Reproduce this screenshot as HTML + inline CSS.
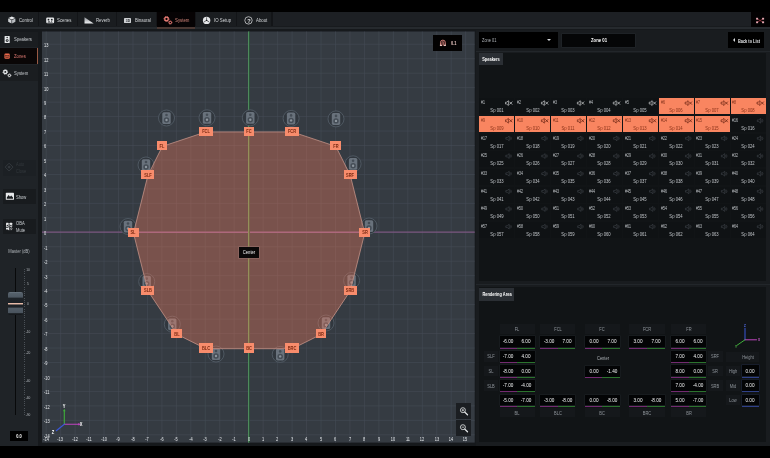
<!DOCTYPE html>
<html><head><meta charset="utf-8"><title>Zones</title>
<style>
html,body{margin:0;padding:0;background:#000;}
body{width:770px;height:458px;overflow:hidden;position:relative;font-family:"Liberation Sans",sans-serif;}
#r{position:absolute;left:0;top:0;width:770px;height:458px;overflow:hidden;filter:brightness(1);}
#r div,#r svg,#r span.t{position:absolute;}
#r span.t{white-space:nowrap;display:block;}
</style></head><body><div id="r">
<div style="left:0.00px;top:11.60px;width:770.00px;height:434.00px;background:#16191c;"></div>
<div style="left:0.00px;top:11.60px;width:770.00px;height:14.80px;background:#1d2024;"></div>
<div style="left:0.00px;top:11.60px;width:272.00px;height:14.80px;background:#1a1d20;"></div>
<div style="left:0.00px;top:26.40px;width:770.00px;height:1.00px;background:#181b1e;"></div>
<div style="left:0.00px;top:27.30px;width:770.00px;height:1.40px;background:#262a2e;"></div>
<div style="left:38.10px;top:11.60px;width:1.20px;height:14.80px;background:#131518;"></div>
<span class="t" style="left:18.70px;top:17px;font-size:5.7px;line-height:6px;color:#d4d7da;font-weight:400;transform:scaleX(0.76);transform-origin:0 50%;">Control</span>
<div style="left:76.60px;top:11.60px;width:1.20px;height:14.80px;background:#131518;"></div>
<span class="t" style="left:57.30px;top:17px;font-size:5.7px;line-height:6px;color:#d4d7da;font-weight:400;transform:scaleX(0.76);transform-origin:0 50%;">Scenes</span>
<div style="left:115.80px;top:11.60px;width:1.20px;height:14.80px;background:#131518;"></div>
<span class="t" style="left:96.00px;top:17px;font-size:5.7px;line-height:6px;color:#d4d7da;font-weight:400;transform:scaleX(0.76);transform-origin:0 50%;">Reverb</span>
<div style="left:156.00px;top:11.60px;width:1.20px;height:14.80px;background:#131518;"></div>
<span class="t" style="left:134.80px;top:17px;font-size:5.7px;line-height:6px;color:#d4d7da;font-weight:400;transform:scaleX(0.76);transform-origin:0 50%;">Binaural</span>
<div style="left:157.20px;top:11.60px;width:37.60px;height:15.20px;background:#060304;"></div>
<div style="left:157.20px;top:27.30px;width:37.60px;height:1.40px;background:#4a3833;"></div>
<div style="left:194.80px;top:11.60px;width:1.20px;height:14.80px;background:#131518;"></div>
<span class="t" style="left:175.30px;top:17px;font-size:5.7px;line-height:6px;color:#d98a7e;font-weight:400;transform:scaleX(0.76);transform-origin:0 50%;">System</span>
<div style="left:235.80px;top:11.60px;width:1.20px;height:14.80px;background:#131518;"></div>
<span class="t" style="left:214.20px;top:17px;font-size:5.7px;line-height:6px;color:#d4d7da;font-weight:400;transform:scaleX(0.76);transform-origin:0 50%;">IO Setup</span>
<div style="left:271.40px;top:11.60px;width:1.20px;height:14.80px;background:#131518;"></div>
<span class="t" style="left:255.80px;top:17px;font-size:5.7px;line-height:6px;color:#d4d7da;font-weight:400;transform:scaleX(0.76);transform-origin:0 50%;">About</span>
<div style="left:0.00px;top:31.50px;width:38.00px;height:414.10px;background:#1f2327;"></div>
<div style="left:0.00px;top:31.60px;width:38.00px;height:15.60px;background:#1a1d20;"></div>
<span class="t" style="left:13.60px;top:36px;font-size:5.6px;line-height:6px;color:#c9cdd1;font-weight:400;transform:scaleX(0.76);transform-origin:0 50%;">Speakers</span>
<div style="left:0.00px;top:48.20px;width:38.00px;height:16.00px;background:#0a0606;"></div>
<div style="left:37.30px;top:48.20px;width:0.80px;height:16.00px;background:#9a5a44;"></div>
<span class="t" style="left:13.60px;top:53px;font-size:5.6px;line-height:6px;color:#e27c74;font-weight:400;transform:scaleX(0.76);transform-origin:0 50%;">Zones</span>
<div style="left:0.00px;top:65.00px;width:38.00px;height:15.80px;background:#1a1d20;"></div>
<span class="t" style="left:13.60px;top:70px;font-size:5.6px;line-height:6px;color:#c9cdd1;font-weight:400;transform:scaleX(0.76);transform-origin:0 50%;">System</span>
<div style="left:2.50px;top:159.50px;width:33.50px;height:16.00px;background:#1c2024;"></div>
<span class="t" style="left:16.00px;top:161px;font-size:5.2px;line-height:6px;color:#33383d;font-weight:400;transform:scaleX(0.76);transform-origin:0 50%;">Auto</span>
<span class="t" style="left:16.00px;top:168px;font-size:5.2px;line-height:6px;color:#33383d;font-weight:400;transform:scaleX(0.76);transform-origin:0 50%;">Close</span>
<div style="left:2.50px;top:188.70px;width:33.50px;height:15.80px;background:#181b1e;"></div>
<span class="t" style="left:16.00px;top:194px;font-size:5.4px;line-height:6px;color:#c9cdd1;font-weight:400;transform:scaleX(0.76);transform-origin:0 50%;">Show</span>
<div style="left:2.50px;top:218.50px;width:33.50px;height:15.80px;background:#181b1e;"></div>
<span class="t" style="left:16.00px;top:220px;font-size:5.4px;line-height:6px;color:#c9cdd1;font-weight:400;transform:scaleX(0.76);transform-origin:0 50%;">OBA</span>
<span class="t" style="left:16.00px;top:227px;font-size:5.4px;line-height:6px;color:#c9cdd1;font-weight:400;transform:scaleX(0.76);transform-origin:0 50%;">Mute</span>
<span class="t" style="left:19.00px;top:248px;font-size:5.4px;line-height:6px;color:#aeb3b8;font-weight:400;transform:translateX(-50%) scaleX(0.76);">Master (dB)</span>
<div style="left:14.90px;top:268.00px;width:1.00px;height:147.00px;background:#08090a;"></div>
<span class="t" style="left:28.40px;top:268px;font-size:3.8px;line-height:4px;color:#b4b9be;font-weight:400;transform:translateX(-50%) scaleX(0.85);">10</span>
<span class="t" style="left:28.40px;top:282px;font-size:3.8px;line-height:4px;color:#b4b9be;font-weight:400;transform:translateX(-50%) scaleX(0.85);">5</span>
<span class="t" style="left:28.40px;top:302px;font-size:3.8px;line-height:4px;color:#b4b9be;font-weight:400;transform:translateX(-50%) scaleX(0.85);">0</span>
<span class="t" style="left:28.40px;top:330px;font-size:3.8px;line-height:4px;color:#b4b9be;font-weight:400;transform:translateX(-50%) scaleX(0.85);">-10</span>
<span class="t" style="left:28.40px;top:351px;font-size:3.8px;line-height:4px;color:#b4b9be;font-weight:400;transform:translateX(-50%) scaleX(0.85);">-20</span>
<span class="t" style="left:28.40px;top:379px;font-size:3.8px;line-height:4px;color:#b4b9be;font-weight:400;transform:translateX(-50%) scaleX(0.85);">-40</span>
<span class="t" style="left:28.40px;top:396px;font-size:3.8px;line-height:4px;color:#b4b9be;font-weight:400;transform:translateX(-50%) scaleX(0.85);">-60</span>
<span class="t" style="left:28.40px;top:413px;font-size:3.8px;line-height:4px;color:#b4b9be;font-weight:400;transform:translateX(-50%) scaleX(0.85);">-90</span>
<div style="left:8.3px;top:292px;width:14.6px;height:23px;border-radius:2px;background:linear-gradient(#6a7680 0%,#56616b 6%,#4d5761 22%,#1e2328 27%,#1b2025 47%,#e8bba8 49.5%,#e8bba8 53%,#1b2025 55.5%,#1e2328 66%,#525c66 70%,#4a545e 90%,#1a1e22 94%,#15181b 100%);"></div>
<div style="left:24.00px;top:269.00px;width:0.80px;height:0.80px;background:#4a5056;"></div>
<div style="left:24.00px;top:271.20px;width:0.80px;height:0.80px;background:#4a5056;"></div>
<div style="left:24.00px;top:273.40px;width:0.80px;height:0.80px;background:#4a5056;"></div>
<div style="left:24.00px;top:275.60px;width:0.80px;height:0.80px;background:#4a5056;"></div>
<div style="left:24.00px;top:277.80px;width:0.80px;height:0.80px;background:#4a5056;"></div>
<div style="left:24.00px;top:280.00px;width:0.80px;height:0.80px;background:#4a5056;"></div>
<div style="left:24.00px;top:282.20px;width:0.80px;height:0.80px;background:#4a5056;"></div>
<div style="left:24.00px;top:284.40px;width:0.80px;height:0.80px;background:#4a5056;"></div>
<div style="left:24.00px;top:286.60px;width:0.80px;height:0.80px;background:#4a5056;"></div>
<div style="left:24.00px;top:288.80px;width:0.80px;height:0.80px;background:#4a5056;"></div>
<div style="left:24.00px;top:291.00px;width:0.80px;height:0.80px;background:#4a5056;"></div>
<div style="left:24.00px;top:293.20px;width:0.80px;height:0.80px;background:#4a5056;"></div>
<div style="left:24.00px;top:295.40px;width:0.80px;height:0.80px;background:#4a5056;"></div>
<div style="left:24.00px;top:297.60px;width:0.80px;height:0.80px;background:#4a5056;"></div>
<div style="left:24.00px;top:299.80px;width:0.80px;height:0.80px;background:#4a5056;"></div>
<div style="left:24.00px;top:302.00px;width:0.80px;height:0.80px;background:#4a5056;"></div>
<div style="left:24.00px;top:304.20px;width:0.80px;height:0.80px;background:#4a5056;"></div>
<div style="left:24.00px;top:306.40px;width:0.80px;height:0.80px;background:#4a5056;"></div>
<div style="left:24.00px;top:308.60px;width:0.80px;height:0.80px;background:#4a5056;"></div>
<div style="left:24.00px;top:310.80px;width:0.80px;height:0.80px;background:#4a5056;"></div>
<div style="left:24.00px;top:313.00px;width:0.80px;height:0.80px;background:#4a5056;"></div>
<div style="left:24.00px;top:315.20px;width:0.80px;height:0.80px;background:#4a5056;"></div>
<div style="left:24.00px;top:317.40px;width:0.80px;height:0.80px;background:#4a5056;"></div>
<div style="left:24.00px;top:319.60px;width:0.80px;height:0.80px;background:#4a5056;"></div>
<div style="left:24.00px;top:321.80px;width:0.80px;height:0.80px;background:#4a5056;"></div>
<div style="left:24.00px;top:324.00px;width:0.80px;height:0.80px;background:#4a5056;"></div>
<div style="left:24.00px;top:326.20px;width:0.80px;height:0.80px;background:#4a5056;"></div>
<div style="left:24.00px;top:328.40px;width:0.80px;height:0.80px;background:#4a5056;"></div>
<div style="left:24.00px;top:330.60px;width:0.80px;height:0.80px;background:#4a5056;"></div>
<div style="left:24.00px;top:332.80px;width:0.80px;height:0.80px;background:#4a5056;"></div>
<div style="left:24.00px;top:335.00px;width:0.80px;height:0.80px;background:#4a5056;"></div>
<div style="left:24.00px;top:337.20px;width:0.80px;height:0.80px;background:#4a5056;"></div>
<div style="left:24.00px;top:339.40px;width:0.80px;height:0.80px;background:#4a5056;"></div>
<div style="left:24.00px;top:341.60px;width:0.80px;height:0.80px;background:#4a5056;"></div>
<div style="left:24.00px;top:343.80px;width:0.80px;height:0.80px;background:#4a5056;"></div>
<div style="left:24.00px;top:346.00px;width:0.80px;height:0.80px;background:#4a5056;"></div>
<div style="left:24.00px;top:348.20px;width:0.80px;height:0.80px;background:#4a5056;"></div>
<div style="left:24.00px;top:350.40px;width:0.80px;height:0.80px;background:#4a5056;"></div>
<div style="left:24.00px;top:352.60px;width:0.80px;height:0.80px;background:#4a5056;"></div>
<div style="left:24.00px;top:354.80px;width:0.80px;height:0.80px;background:#4a5056;"></div>
<div style="left:24.00px;top:357.00px;width:0.80px;height:0.80px;background:#4a5056;"></div>
<div style="left:24.00px;top:359.20px;width:0.80px;height:0.80px;background:#4a5056;"></div>
<div style="left:24.00px;top:361.40px;width:0.80px;height:0.80px;background:#4a5056;"></div>
<div style="left:24.00px;top:363.60px;width:0.80px;height:0.80px;background:#4a5056;"></div>
<div style="left:24.00px;top:365.80px;width:0.80px;height:0.80px;background:#4a5056;"></div>
<div style="left:24.00px;top:368.00px;width:0.80px;height:0.80px;background:#4a5056;"></div>
<div style="left:24.00px;top:370.20px;width:0.80px;height:0.80px;background:#4a5056;"></div>
<div style="left:24.00px;top:372.40px;width:0.80px;height:0.80px;background:#4a5056;"></div>
<div style="left:24.00px;top:374.60px;width:0.80px;height:0.80px;background:#4a5056;"></div>
<div style="left:24.00px;top:376.80px;width:0.80px;height:0.80px;background:#4a5056;"></div>
<div style="left:24.00px;top:379.00px;width:0.80px;height:0.80px;background:#4a5056;"></div>
<div style="left:24.00px;top:381.20px;width:0.80px;height:0.80px;background:#4a5056;"></div>
<div style="left:24.00px;top:383.40px;width:0.80px;height:0.80px;background:#4a5056;"></div>
<div style="left:24.00px;top:385.60px;width:0.80px;height:0.80px;background:#4a5056;"></div>
<div style="left:24.00px;top:387.80px;width:0.80px;height:0.80px;background:#4a5056;"></div>
<div style="left:24.00px;top:390.00px;width:0.80px;height:0.80px;background:#4a5056;"></div>
<div style="left:24.00px;top:392.20px;width:0.80px;height:0.80px;background:#4a5056;"></div>
<div style="left:24.00px;top:394.40px;width:0.80px;height:0.80px;background:#4a5056;"></div>
<div style="left:24.00px;top:396.60px;width:0.80px;height:0.80px;background:#4a5056;"></div>
<div style="left:24.00px;top:398.80px;width:0.80px;height:0.80px;background:#4a5056;"></div>
<div style="left:24.00px;top:401.00px;width:0.80px;height:0.80px;background:#4a5056;"></div>
<div style="left:24.00px;top:403.20px;width:0.80px;height:0.80px;background:#4a5056;"></div>
<div style="left:24.00px;top:405.40px;width:0.80px;height:0.80px;background:#4a5056;"></div>
<div style="left:24.00px;top:407.60px;width:0.80px;height:0.80px;background:#4a5056;"></div>
<div style="left:24.00px;top:409.80px;width:0.80px;height:0.80px;background:#4a5056;"></div>
<div style="left:24.00px;top:412.00px;width:0.80px;height:0.80px;background:#4a5056;"></div>
<div style="left:24.00px;top:414.20px;width:0.80px;height:0.80px;background:#4a5056;"></div>
<div style="left:9.90px;top:431.00px;width:18.40px;height:10.00px;background:#000;"></div>
<span class="t" style="left:19.10px;top:433px;font-size:5.2px;line-height:6px;color:#fff;font-weight:700;transform:translateX(-50%) scaleX(0.76);">0.0</span>
<svg style="left:42px;top:31px;" width="434" height="413"><g transform="translate(0.000,0.500) scale(1.0000,1.0000) translate(-0.0,-0.0)"><rect x="0" y="0" width="432.7" height="411.1" fill="#353b42"/><line x1="4.19" y1="0" x2="4.19" y2="411.1" stroke="#454c55" stroke-width="0.6"/><line x1="18.66" y1="0" x2="18.66" y2="411.1" stroke="#454c55" stroke-width="0.6"/><line x1="33.12" y1="0" x2="33.12" y2="411.1" stroke="#454c55" stroke-width="0.6"/><line x1="47.58" y1="0" x2="47.58" y2="411.1" stroke="#454c55" stroke-width="0.6"/><line x1="62.05" y1="0" x2="62.05" y2="411.1" stroke="#454c55" stroke-width="0.6"/><line x1="76.51" y1="0" x2="76.51" y2="411.1" stroke="#454c55" stroke-width="0.6"/><line x1="90.98" y1="0" x2="90.98" y2="411.1" stroke="#454c55" stroke-width="0.6"/><line x1="105.44" y1="0" x2="105.44" y2="411.1" stroke="#454c55" stroke-width="0.6"/><line x1="119.91" y1="0" x2="119.91" y2="411.1" stroke="#454c55" stroke-width="0.6"/><line x1="134.38" y1="0" x2="134.38" y2="411.1" stroke="#454c55" stroke-width="0.6"/><line x1="148.84" y1="0" x2="148.84" y2="411.1" stroke="#454c55" stroke-width="0.6"/><line x1="163.31" y1="0" x2="163.31" y2="411.1" stroke="#454c55" stroke-width="0.6"/><line x1="177.77" y1="0" x2="177.77" y2="411.1" stroke="#454c55" stroke-width="0.6"/><line x1="192.23" y1="0" x2="192.23" y2="411.1" stroke="#454c55" stroke-width="0.6"/><line x1="206.70" y1="0" x2="206.70" y2="411.1" stroke="#454c55" stroke-width="0.6"/><line x1="221.16" y1="0" x2="221.16" y2="411.1" stroke="#454c55" stroke-width="0.6"/><line x1="235.63" y1="0" x2="235.63" y2="411.1" stroke="#454c55" stroke-width="0.6"/><line x1="250.09" y1="0" x2="250.09" y2="411.1" stroke="#454c55" stroke-width="0.6"/><line x1="264.56" y1="0" x2="264.56" y2="411.1" stroke="#454c55" stroke-width="0.6"/><line x1="279.02" y1="0" x2="279.02" y2="411.1" stroke="#454c55" stroke-width="0.6"/><line x1="293.49" y1="0" x2="293.49" y2="411.1" stroke="#454c55" stroke-width="0.6"/><line x1="307.95" y1="0" x2="307.95" y2="411.1" stroke="#454c55" stroke-width="0.6"/><line x1="322.42" y1="0" x2="322.42" y2="411.1" stroke="#454c55" stroke-width="0.6"/><line x1="336.88" y1="0" x2="336.88" y2="411.1" stroke="#454c55" stroke-width="0.6"/><line x1="351.35" y1="0" x2="351.35" y2="411.1" stroke="#454c55" stroke-width="0.6"/><line x1="365.81" y1="0" x2="365.81" y2="411.1" stroke="#454c55" stroke-width="0.6"/><line x1="380.28" y1="0" x2="380.28" y2="411.1" stroke="#454c55" stroke-width="0.6"/><line x1="394.75" y1="0" x2="394.75" y2="411.1" stroke="#454c55" stroke-width="0.6"/><line x1="409.21" y1="0" x2="409.21" y2="411.1" stroke="#454c55" stroke-width="0.6"/><line x1="423.67" y1="0" x2="423.67" y2="411.1" stroke="#454c55" stroke-width="0.6"/><line x1="0" y1="403.31" x2="432.7" y2="403.31" stroke="#454c55" stroke-width="0.6"/><line x1="0" y1="388.85" x2="432.7" y2="388.85" stroke="#454c55" stroke-width="0.6"/><line x1="0" y1="374.38" x2="432.7" y2="374.38" stroke="#454c55" stroke-width="0.6"/><line x1="0" y1="359.92" x2="432.7" y2="359.92" stroke="#454c55" stroke-width="0.6"/><line x1="0" y1="345.45" x2="432.7" y2="345.45" stroke="#454c55" stroke-width="0.6"/><line x1="0" y1="330.99" x2="432.7" y2="330.99" stroke="#454c55" stroke-width="0.6"/><line x1="0" y1="316.52" x2="432.7" y2="316.52" stroke="#454c55" stroke-width="0.6"/><line x1="0" y1="302.06" x2="432.7" y2="302.06" stroke="#454c55" stroke-width="0.6"/><line x1="0" y1="287.59" x2="432.7" y2="287.59" stroke="#454c55" stroke-width="0.6"/><line x1="0" y1="273.12" x2="432.7" y2="273.12" stroke="#454c55" stroke-width="0.6"/><line x1="0" y1="258.66" x2="432.7" y2="258.66" stroke="#454c55" stroke-width="0.6"/><line x1="0" y1="244.19" x2="432.7" y2="244.19" stroke="#454c55" stroke-width="0.6"/><line x1="0" y1="229.73" x2="432.7" y2="229.73" stroke="#454c55" stroke-width="0.6"/><line x1="0" y1="215.27" x2="432.7" y2="215.27" stroke="#454c55" stroke-width="0.6"/><line x1="0" y1="200.80" x2="432.7" y2="200.80" stroke="#454c55" stroke-width="0.6"/><line x1="0" y1="186.34" x2="432.7" y2="186.34" stroke="#454c55" stroke-width="0.6"/><line x1="0" y1="171.87" x2="432.7" y2="171.87" stroke="#454c55" stroke-width="0.6"/><line x1="0" y1="157.41" x2="432.7" y2="157.41" stroke="#454c55" stroke-width="0.6"/><line x1="0" y1="142.94" x2="432.7" y2="142.94" stroke="#454c55" stroke-width="0.6"/><line x1="0" y1="128.48" x2="432.7" y2="128.48" stroke="#454c55" stroke-width="0.6"/><line x1="0" y1="114.01" x2="432.7" y2="114.01" stroke="#454c55" stroke-width="0.6"/><line x1="0" y1="99.55" x2="432.7" y2="99.55" stroke="#454c55" stroke-width="0.6"/><line x1="0" y1="85.08" x2="432.7" y2="85.08" stroke="#454c55" stroke-width="0.6"/><line x1="0" y1="70.62" x2="432.7" y2="70.62" stroke="#454c55" stroke-width="0.6"/><line x1="0" y1="56.15" x2="432.7" y2="56.15" stroke="#454c55" stroke-width="0.6"/><line x1="0" y1="41.69" x2="432.7" y2="41.69" stroke="#454c55" stroke-width="0.6"/><line x1="0" y1="27.22" x2="432.7" y2="27.22" stroke="#454c55" stroke-width="0.6"/><line x1="0" y1="12.76" x2="432.7" y2="12.76" stroke="#454c55" stroke-width="0.6"/><line x1="0" y1="200.60" x2="432.7" y2="200.60" stroke="#8a5a8c" stroke-width="1.0"/><rect x="206.00" y="0" width="1" height="411.1" fill="#4e8a5c"/><rect x="207.00" y="0" width="0.9" height="411.1" fill="#2b5538"/><circle cx="124.50" cy="86.50" r="8.0" fill="#31373e" stroke="#565f69" stroke-width="0.8"/><rect x="120.30" y="80.70" width="8.4" height="11.8" rx="1.6" fill="#69727c"/><circle cx="124.50" cy="88.50" r="2.7" fill="#454d56"/><circle cx="124.50" cy="88.50" r="1.2" fill="#8d959d"/><circle cx="124.50" cy="83.50" r="1.3" fill="#454d56"/><circle cx="165.00" cy="86.30" r="8.0" fill="#31373e" stroke="#565f69" stroke-width="0.8"/><rect x="160.80" y="80.50" width="8.4" height="11.8" rx="1.6" fill="#69727c"/><circle cx="165.00" cy="88.30" r="2.7" fill="#454d56"/><circle cx="165.00" cy="88.30" r="1.2" fill="#8d959d"/><circle cx="165.00" cy="83.30" r="1.3" fill="#454d56"/><circle cx="208.30" cy="86.30" r="8.0" fill="#31373e" stroke="#565f69" stroke-width="0.8"/><rect x="204.10" y="80.50" width="8.4" height="11.8" rx="1.6" fill="#69727c"/><circle cx="208.30" cy="88.30" r="2.7" fill="#454d56"/><circle cx="208.30" cy="88.30" r="1.2" fill="#8d959d"/><circle cx="208.30" cy="83.30" r="1.3" fill="#454d56"/><circle cx="249.10" cy="86.90" r="8.0" fill="#31373e" stroke="#565f69" stroke-width="0.8"/><rect x="244.90" y="81.10" width="8.4" height="11.8" rx="1.6" fill="#69727c"/><circle cx="249.10" cy="88.90" r="2.7" fill="#454d56"/><circle cx="249.10" cy="88.90" r="1.2" fill="#8d959d"/><circle cx="249.10" cy="83.90" r="1.3" fill="#454d56"/><circle cx="294.00" cy="87.40" r="8.0" fill="#31373e" stroke="#565f69" stroke-width="0.8"/><rect x="289.80" y="81.60" width="8.4" height="11.8" rx="1.6" fill="#69727c"/><circle cx="294.00" cy="89.40" r="2.7" fill="#454d56"/><circle cx="294.00" cy="89.40" r="1.2" fill="#8d959d"/><circle cx="294.00" cy="84.40" r="1.3" fill="#454d56"/><circle cx="311.10" cy="132.30" r="8.0" fill="#31373e" stroke="#565f69" stroke-width="0.8"/><rect x="306.90" y="126.50" width="8.4" height="11.8" rx="1.6" fill="#69727c"/><circle cx="311.10" cy="134.30" r="2.7" fill="#454d56"/><circle cx="311.10" cy="134.30" r="1.2" fill="#8d959d"/><circle cx="311.10" cy="129.30" r="1.3" fill="#454d56"/><circle cx="327.00" cy="194.50" r="8.0" fill="#31373e" stroke="#565f69" stroke-width="0.8"/><rect x="322.80" y="188.70" width="8.4" height="11.8" rx="1.6" fill="#69727c"/><circle cx="327.00" cy="196.50" r="2.7" fill="#454d56"/><circle cx="327.00" cy="196.50" r="1.2" fill="#8d959d"/><circle cx="327.00" cy="191.50" r="1.3" fill="#454d56"/><circle cx="309.60" cy="249.00" r="8.0" fill="#31373e" stroke="#565f69" stroke-width="0.8"/><rect x="305.40" y="243.20" width="8.4" height="11.8" rx="1.6" fill="#69727c"/><circle cx="309.60" cy="251.00" r="2.7" fill="#454d56"/><circle cx="309.60" cy="251.00" r="1.2" fill="#8d959d"/><circle cx="309.60" cy="246.00" r="1.3" fill="#454d56"/><circle cx="284.00" cy="291.50" r="8.0" fill="#31373e" stroke="#565f69" stroke-width="0.8"/><rect x="279.80" y="285.70" width="8.4" height="11.8" rx="1.6" fill="#69727c"/><circle cx="284.00" cy="293.50" r="2.7" fill="#454d56"/><circle cx="284.00" cy="293.50" r="1.2" fill="#8d959d"/><circle cx="284.00" cy="288.50" r="1.3" fill="#454d56"/><circle cx="238.20" cy="322.90" r="8.0" fill="#31373e" stroke="#565f69" stroke-width="0.8"/><rect x="234.00" y="317.10" width="8.4" height="11.8" rx="1.6" fill="#69727c"/><circle cx="238.20" cy="324.90" r="2.7" fill="#454d56"/><circle cx="238.20" cy="324.90" r="1.2" fill="#8d959d"/><circle cx="238.20" cy="319.90" r="1.3" fill="#454d56"/><circle cx="174.00" cy="322.50" r="8.0" fill="#31373e" stroke="#565f69" stroke-width="0.8"/><rect x="169.80" y="316.70" width="8.4" height="11.8" rx="1.6" fill="#69727c"/><circle cx="174.00" cy="324.50" r="2.7" fill="#454d56"/><circle cx="174.00" cy="324.50" r="1.2" fill="#8d959d"/><circle cx="174.00" cy="319.50" r="1.3" fill="#454d56"/><circle cx="130.30" cy="292.70" r="8.0" fill="#31373e" stroke="#565f69" stroke-width="0.8"/><rect x="126.10" y="286.90" width="8.4" height="11.8" rx="1.6" fill="#69727c"/><circle cx="130.30" cy="294.70" r="2.7" fill="#454d56"/><circle cx="130.30" cy="294.70" r="1.2" fill="#8d959d"/><circle cx="130.30" cy="289.70" r="1.3" fill="#454d56"/><circle cx="104.70" cy="250.10" r="8.0" fill="#31373e" stroke="#565f69" stroke-width="0.8"/><rect x="100.50" y="244.30" width="8.4" height="11.8" rx="1.6" fill="#69727c"/><circle cx="104.70" cy="252.10" r="2.7" fill="#454d56"/><circle cx="104.70" cy="252.10" r="1.2" fill="#8d959d"/><circle cx="104.70" cy="247.10" r="1.3" fill="#454d56"/><circle cx="86.00" cy="195.00" r="8.0" fill="#31373e" stroke="#565f69" stroke-width="0.8"/><rect x="81.80" y="189.20" width="8.4" height="11.8" rx="1.6" fill="#69727c"/><circle cx="86.00" cy="197.00" r="2.7" fill="#454d56"/><circle cx="86.00" cy="197.00" r="1.2" fill="#8d959d"/><circle cx="86.00" cy="192.00" r="1.3" fill="#454d56"/><circle cx="104.00" cy="133.50" r="8.0" fill="#31373e" stroke="#565f69" stroke-width="0.8"/><rect x="99.80" y="127.70" width="8.4" height="11.8" rx="1.6" fill="#69727c"/><circle cx="104.00" cy="135.50" r="2.7" fill="#454d56"/><circle cx="104.00" cy="135.50" r="1.2" fill="#8d959d"/><circle cx="104.00" cy="130.50" r="1.3" fill="#454d56"/><polygon points="120.40,114.90 163.75,100.45 207.10,100.45 250.45,100.45 293.80,114.90 308.25,143.80 322.70,201.60 308.25,259.40 279.35,302.75 250.45,317.20 207.10,317.20 163.75,317.20 134.85,302.75 105.95,259.40 91.50,201.60 105.95,143.80" fill="rgba(245,125,95,0.36)" stroke="#b98a80" stroke-width="0.9"/><line x1="91.50" y1="200.85" x2="322.70" y2="200.85" stroke="#b06a80" stroke-width="1.0"/><rect x="206.00" y="100.45" width="1" height="216.75" fill="#94905a"/><rect x="207.00" y="100.45" width="0.9" height="216.75" fill="#7d6648"/></g></svg>
<span class="t" style="left:45.99px;top:437px;font-size:4.9px;line-height:5px;color:#e4e7ea;font-weight:400;transform:translateX(-50%) scaleX(0.8);">-14</span>
<span class="t" style="left:60.45px;top:437px;font-size:4.9px;line-height:5px;color:#e4e7ea;font-weight:400;transform:translateX(-50%) scaleX(0.8);">-13</span>
<span class="t" style="left:74.92px;top:437px;font-size:4.9px;line-height:5px;color:#e4e7ea;font-weight:400;transform:translateX(-50%) scaleX(0.8);">-12</span>
<span class="t" style="left:89.38px;top:437px;font-size:4.9px;line-height:5px;color:#e4e7ea;font-weight:400;transform:translateX(-50%) scaleX(0.8);">-11</span>
<span class="t" style="left:103.85px;top:437px;font-size:4.9px;line-height:5px;color:#e4e7ea;font-weight:400;transform:translateX(-50%) scaleX(0.8);">-10</span>
<span class="t" style="left:118.31px;top:437px;font-size:4.9px;line-height:5px;color:#e4e7ea;font-weight:400;transform:translateX(-50%) scaleX(0.8);">-9</span>
<span class="t" style="left:132.78px;top:437px;font-size:4.9px;line-height:5px;color:#e4e7ea;font-weight:400;transform:translateX(-50%) scaleX(0.8);">-8</span>
<span class="t" style="left:147.25px;top:437px;font-size:4.9px;line-height:5px;color:#e4e7ea;font-weight:400;transform:translateX(-50%) scaleX(0.8);">-7</span>
<span class="t" style="left:161.71px;top:437px;font-size:4.9px;line-height:5px;color:#e4e7ea;font-weight:400;transform:translateX(-50%) scaleX(0.8);">-6</span>
<span class="t" style="left:176.18px;top:437px;font-size:4.9px;line-height:5px;color:#e4e7ea;font-weight:400;transform:translateX(-50%) scaleX(0.8);">-5</span>
<span class="t" style="left:190.64px;top:437px;font-size:4.9px;line-height:5px;color:#e4e7ea;font-weight:400;transform:translateX(-50%) scaleX(0.8);">-4</span>
<span class="t" style="left:205.11px;top:437px;font-size:4.9px;line-height:5px;color:#e4e7ea;font-weight:400;transform:translateX(-50%) scaleX(0.8);">-3</span>
<span class="t" style="left:219.57px;top:437px;font-size:4.9px;line-height:5px;color:#e4e7ea;font-weight:400;transform:translateX(-50%) scaleX(0.8);">-2</span>
<span class="t" style="left:234.03px;top:437px;font-size:4.9px;line-height:5px;color:#e4e7ea;font-weight:400;transform:translateX(-50%) scaleX(0.8);">-1</span>
<span class="t" style="left:248.50px;top:437px;font-size:4.9px;line-height:5px;color:#e4e7ea;font-weight:400;transform:translateX(-50%) scaleX(0.8);">0</span>
<span class="t" style="left:262.96px;top:437px;font-size:4.9px;line-height:5px;color:#e4e7ea;font-weight:400;transform:translateX(-50%) scaleX(0.8);">1</span>
<span class="t" style="left:277.43px;top:437px;font-size:4.9px;line-height:5px;color:#e4e7ea;font-weight:400;transform:translateX(-50%) scaleX(0.8);">2</span>
<span class="t" style="left:291.89px;top:437px;font-size:4.9px;line-height:5px;color:#e4e7ea;font-weight:400;transform:translateX(-50%) scaleX(0.8);">3</span>
<span class="t" style="left:306.36px;top:437px;font-size:4.9px;line-height:5px;color:#e4e7ea;font-weight:400;transform:translateX(-50%) scaleX(0.8);">4</span>
<span class="t" style="left:320.82px;top:437px;font-size:4.9px;line-height:5px;color:#e4e7ea;font-weight:400;transform:translateX(-50%) scaleX(0.8);">5</span>
<span class="t" style="left:335.29px;top:437px;font-size:4.9px;line-height:5px;color:#e4e7ea;font-weight:400;transform:translateX(-50%) scaleX(0.8);">6</span>
<span class="t" style="left:349.75px;top:437px;font-size:4.9px;line-height:5px;color:#e4e7ea;font-weight:400;transform:translateX(-50%) scaleX(0.8);">7</span>
<span class="t" style="left:364.22px;top:437px;font-size:4.9px;line-height:5px;color:#e4e7ea;font-weight:400;transform:translateX(-50%) scaleX(0.8);">8</span>
<span class="t" style="left:378.69px;top:437px;font-size:4.9px;line-height:5px;color:#e4e7ea;font-weight:400;transform:translateX(-50%) scaleX(0.8);">9</span>
<span class="t" style="left:393.15px;top:437px;font-size:4.9px;line-height:5px;color:#e4e7ea;font-weight:400;transform:translateX(-50%) scaleX(0.8);">10</span>
<span class="t" style="left:407.62px;top:437px;font-size:4.9px;line-height:5px;color:#e4e7ea;font-weight:400;transform:translateX(-50%) scaleX(0.8);">11</span>
<span class="t" style="left:422.08px;top:437px;font-size:4.9px;line-height:5px;color:#e4e7ea;font-weight:400;transform:translateX(-50%) scaleX(0.8);">12</span>
<span class="t" style="left:436.55px;top:437px;font-size:4.9px;line-height:5px;color:#e4e7ea;font-weight:400;transform:translateX(-50%) scaleX(0.8);">13</span>
<span class="t" style="left:451.01px;top:437px;font-size:4.9px;line-height:5px;color:#e4e7ea;font-weight:400;transform:translateX(-50%) scaleX(0.8);">14</span>
<span class="t" style="left:465.47px;top:437px;font-size:4.9px;line-height:5px;color:#e4e7ea;font-weight:400;transform:translateX(-50%) scaleX(0.8);">15</span>
<span class="t" style="left:44.00px;top:434px;font-size:4.9px;line-height:5px;color:#e4e7ea;font-weight:400;transform:scaleX(0.8);transform-origin:0 50%;">-14</span>
<span class="t" style="left:44.00px;top:419px;font-size:4.9px;line-height:5px;color:#e4e7ea;font-weight:400;transform:scaleX(0.8);transform-origin:0 50%;">-13</span>
<span class="t" style="left:44.00px;top:405px;font-size:4.9px;line-height:5px;color:#e4e7ea;font-weight:400;transform:scaleX(0.8);transform-origin:0 50%;">-12</span>
<span class="t" style="left:44.00px;top:390px;font-size:4.9px;line-height:5px;color:#e4e7ea;font-weight:400;transform:scaleX(0.8);transform-origin:0 50%;">-11</span>
<span class="t" style="left:44.00px;top:376px;font-size:4.9px;line-height:5px;color:#e4e7ea;font-weight:400;transform:scaleX(0.8);transform-origin:0 50%;">-10</span>
<span class="t" style="left:44.00px;top:361px;font-size:4.9px;line-height:5px;color:#e4e7ea;font-weight:400;transform:scaleX(0.8);transform-origin:0 50%;">-9</span>
<span class="t" style="left:44.00px;top:347px;font-size:4.9px;line-height:5px;color:#e4e7ea;font-weight:400;transform:scaleX(0.8);transform-origin:0 50%;">-8</span>
<span class="t" style="left:44.00px;top:332px;font-size:4.9px;line-height:5px;color:#e4e7ea;font-weight:400;transform:scaleX(0.8);transform-origin:0 50%;">-7</span>
<span class="t" style="left:44.00px;top:318px;font-size:4.9px;line-height:5px;color:#e4e7ea;font-weight:400;transform:scaleX(0.8);transform-origin:0 50%;">-6</span>
<span class="t" style="left:44.00px;top:303px;font-size:4.9px;line-height:5px;color:#e4e7ea;font-weight:400;transform:scaleX(0.8);transform-origin:0 50%;">-5</span>
<span class="t" style="left:44.00px;top:289px;font-size:4.9px;line-height:5px;color:#e4e7ea;font-weight:400;transform:scaleX(0.8);transform-origin:0 50%;">-4</span>
<span class="t" style="left:44.00px;top:275px;font-size:4.9px;line-height:5px;color:#e4e7ea;font-weight:400;transform:scaleX(0.8);transform-origin:0 50%;">-3</span>
<span class="t" style="left:44.00px;top:260px;font-size:4.9px;line-height:5px;color:#e4e7ea;font-weight:400;transform:scaleX(0.8);transform-origin:0 50%;">-2</span>
<span class="t" style="left:44.00px;top:246px;font-size:4.9px;line-height:5px;color:#e4e7ea;font-weight:400;transform:scaleX(0.8);transform-origin:0 50%;">-1</span>
<span class="t" style="left:44.00px;top:231px;font-size:4.9px;line-height:5px;color:#e4e7ea;font-weight:400;transform:scaleX(0.8);transform-origin:0 50%;">0</span>
<span class="t" style="left:44.00px;top:217px;font-size:4.9px;line-height:5px;color:#e4e7ea;font-weight:400;transform:scaleX(0.8);transform-origin:0 50%;">1</span>
<span class="t" style="left:44.00px;top:202px;font-size:4.9px;line-height:5px;color:#e4e7ea;font-weight:400;transform:scaleX(0.8);transform-origin:0 50%;">2</span>
<span class="t" style="left:44.00px;top:188px;font-size:4.9px;line-height:5px;color:#e4e7ea;font-weight:400;transform:scaleX(0.8);transform-origin:0 50%;">3</span>
<span class="t" style="left:44.00px;top:173px;font-size:4.9px;line-height:5px;color:#e4e7ea;font-weight:400;transform:scaleX(0.8);transform-origin:0 50%;">4</span>
<span class="t" style="left:44.00px;top:159px;font-size:4.9px;line-height:5px;color:#e4e7ea;font-weight:400;transform:scaleX(0.8);transform-origin:0 50%;">5</span>
<span class="t" style="left:44.00px;top:144px;font-size:4.9px;line-height:5px;color:#e4e7ea;font-weight:400;transform:scaleX(0.8);transform-origin:0 50%;">6</span>
<span class="t" style="left:44.00px;top:130px;font-size:4.9px;line-height:5px;color:#e4e7ea;font-weight:400;transform:scaleX(0.8);transform-origin:0 50%;">7</span>
<span class="t" style="left:44.00px;top:115px;font-size:4.9px;line-height:5px;color:#e4e7ea;font-weight:400;transform:scaleX(0.8);transform-origin:0 50%;">8</span>
<span class="t" style="left:44.00px;top:101px;font-size:4.9px;line-height:5px;color:#e4e7ea;font-weight:400;transform:scaleX(0.8);transform-origin:0 50%;">9</span>
<span class="t" style="left:44.00px;top:87px;font-size:4.9px;line-height:5px;color:#e4e7ea;font-weight:400;transform:scaleX(0.8);transform-origin:0 50%;">10</span>
<span class="t" style="left:44.00px;top:72px;font-size:4.9px;line-height:5px;color:#e4e7ea;font-weight:400;transform:scaleX(0.8);transform-origin:0 50%;">11</span>
<span class="t" style="left:44.00px;top:58px;font-size:4.9px;line-height:5px;color:#e4e7ea;font-weight:400;transform:scaleX(0.8);transform-origin:0 50%;">12</span>
<span class="t" style="left:44.00px;top:43px;font-size:4.9px;line-height:5px;color:#e4e7ea;font-weight:400;transform:scaleX(0.8);transform-origin:0 50%;">13</span>
<div style="left:156.90px;top:141.10px;width:10.60px;height:9.40px;background:#f88c6c;"></div>
<span class="t" style="left:162.20px;top:143px;font-size:5.1px;line-height:6px;color:#7a2810;font-weight:700;transform:translateX(-50%) scaleX(0.78);">FL</span>
<div style="left:198.55px;top:126.65px;width:14.00px;height:9.40px;background:#f88c6c;"></div>
<span class="t" style="left:205.55px;top:128px;font-size:5.1px;line-height:6px;color:#7a2810;font-weight:700;transform:translateX(-50%) scaleX(0.78);">FCL</span>
<div style="left:243.60px;top:126.65px;width:10.60px;height:9.40px;background:#f88c6c;"></div>
<span class="t" style="left:248.90px;top:128px;font-size:5.1px;line-height:6px;color:#7a2810;font-weight:700;transform:translateX(-50%) scaleX(0.78);">FC</span>
<div style="left:285.25px;top:126.65px;width:14.00px;height:9.40px;background:#f88c6c;"></div>
<span class="t" style="left:292.25px;top:128px;font-size:5.1px;line-height:6px;color:#7a2810;font-weight:700;transform:translateX(-50%) scaleX(0.78);">FCR</span>
<div style="left:330.30px;top:141.10px;width:10.60px;height:9.40px;background:#f88c6c;"></div>
<span class="t" style="left:335.60px;top:143px;font-size:5.1px;line-height:6px;color:#7a2810;font-weight:700;transform:translateX(-50%) scaleX(0.78);">FR</span>
<div style="left:343.55px;top:170.00px;width:13.00px;height:9.40px;background:#f88c6c;"></div>
<span class="t" style="left:350.05px;top:172px;font-size:5.1px;line-height:6px;color:#7a2810;font-weight:700;transform:translateX(-50%) scaleX(0.78);">SRF</span>
<div style="left:359.20px;top:227.80px;width:10.60px;height:9.40px;background:#f88c6c;"></div>
<span class="t" style="left:364.50px;top:229px;font-size:5.1px;line-height:6px;color:#7a2810;font-weight:700;transform:translateX(-50%) scaleX(0.78);">SR</span>
<div style="left:343.55px;top:285.60px;width:13.00px;height:9.40px;background:#f88c6c;"></div>
<span class="t" style="left:350.05px;top:287px;font-size:5.1px;line-height:6px;color:#7a2810;font-weight:700;transform:translateX(-50%) scaleX(0.78);">SRB</span>
<div style="left:315.85px;top:328.95px;width:10.60px;height:9.40px;background:#f88c6c;"></div>
<span class="t" style="left:321.15px;top:331px;font-size:5.1px;line-height:6px;color:#7a2810;font-weight:700;transform:translateX(-50%) scaleX(0.78);">BR</span>
<div style="left:285.25px;top:343.40px;width:14.00px;height:9.40px;background:#f88c6c;"></div>
<span class="t" style="left:292.25px;top:345px;font-size:5.1px;line-height:6px;color:#7a2810;font-weight:700;transform:translateX(-50%) scaleX(0.78);">BRC</span>
<div style="left:243.60px;top:343.40px;width:10.60px;height:9.40px;background:#f88c6c;"></div>
<span class="t" style="left:248.90px;top:345px;font-size:5.1px;line-height:6px;color:#7a2810;font-weight:700;transform:translateX(-50%) scaleX(0.78);">BC</span>
<div style="left:198.55px;top:343.40px;width:14.00px;height:9.40px;background:#f88c6c;"></div>
<span class="t" style="left:205.55px;top:345px;font-size:5.1px;line-height:6px;color:#7a2810;font-weight:700;transform:translateX(-50%) scaleX(0.78);">BLC</span>
<div style="left:171.35px;top:328.95px;width:10.60px;height:9.40px;background:#f88c6c;"></div>
<span class="t" style="left:176.65px;top:331px;font-size:5.1px;line-height:6px;color:#7a2810;font-weight:700;transform:translateX(-50%) scaleX(0.78);">BL</span>
<div style="left:141.25px;top:285.60px;width:13.00px;height:9.40px;background:#f88c6c;"></div>
<span class="t" style="left:147.75px;top:287px;font-size:5.1px;line-height:6px;color:#7a2810;font-weight:700;transform:translateX(-50%) scaleX(0.78);">SLB</span>
<div style="left:128.00px;top:227.80px;width:10.60px;height:9.40px;background:#f88c6c;"></div>
<span class="t" style="left:133.30px;top:229px;font-size:5.1px;line-height:6px;color:#7a2810;font-weight:700;transform:translateX(-50%) scaleX(0.78);">SL</span>
<div style="left:141.25px;top:170.00px;width:13.00px;height:9.40px;background:#f88c6c;"></div>
<span class="t" style="left:147.75px;top:172px;font-size:5.1px;line-height:6px;color:#7a2810;font-weight:700;transform:translateX(-50%) scaleX(0.78);">SLF</span>
<div style="left:239.00px;top:247.00px;width:19.80px;height:10.50px;background:#0a0808;box-shadow:0 0 0 0.6px #96706a;"></div>
<span class="t" style="left:248.60px;top:249px;font-size:5.2px;line-height:6px;color:#f0f1f2;font-weight:400;transform:translateX(-50%) scaleX(0.8);">Center</span>
<div style="left:433.20px;top:35.00px;width:28.50px;height:15.90px;background:#030202;"></div>
<span class="t" style="left:451.20px;top:41px;font-size:4.9px;line-height:5px;color:#e8c6c2;font-weight:700;transform:scaleX(0.8);transform-origin:0 50%;">0.1</span>
<div style="left:455.80px;top:403.30px;width:15.70px;height:15.90px;background:#1b1e22;"></div>
<div style="left:455.80px;top:420.30px;width:15.70px;height:15.60px;background:#1b1e22;"></div>
<div style="left:476.30px;top:29.50px;width:293.70px;height:416.10px;background:#191c1f;"></div>
<div style="left:479.20px;top:32.40px;width:79.30px;height:15.80px;background:#000;"></div>
<span class="t" style="left:482.40px;top:37px;font-size:5.2px;line-height:6px;color:#aeb3b8;font-weight:400;transform:scaleX(0.76);transform-origin:0 50%;">Zone 01</span>
<div style="left:546.5px;top:39.3px;width:0;height:0;border-left:2.2px solid transparent;border-right:2.2px solid transparent;border-top:2.4px solid #d8dbde;"></div>
<div style="left:562.20px;top:34.00px;width:72.80px;height:13.00px;background:#050607;box-shadow:0 0 0 0.6px #23272b;"></div>
<span class="t" style="left:598.70px;top:37px;font-size:5.6px;line-height:6px;color:#fff;font-weight:700;transform:translateX(-50%) scaleX(0.76);">Zone 01</span>
<div style="left:727.70px;top:32.20px;width:36.50px;height:16.20px;background:#000;"></div>
<div style="left:733px;top:38.4px;width:0;height:0;border-top:2.2px solid transparent;border-bottom:2.2px solid transparent;border-right:2.6px solid #d8dbde;"></div>
<span class="t" style="left:737.60px;top:38px;font-size:5.4px;line-height:6px;color:#e2e4e6;font-weight:700;transform:scaleX(0.72);transform-origin:0 50%;">Back to List</span>
<div style="left:476.30px;top:51.00px;width:293.70px;height:1.20px;background:#22262a;"></div>
<div style="left:478.60px;top:53.00px;width:287.00px;height:228.00px;background:#111416;"></div>
<div style="left:476.30px;top:284.00px;width:293.70px;height:1.20px;background:#22262a;"></div>
<div style="left:479.00px;top:53.00px;width:23.70px;height:11.80px;background:#2b2f34;"></div>
<span class="t" style="left:490.80px;top:56px;font-size:5.2px;line-height:6px;color:#fff;font-weight:700;transform:translateX(-50%) scaleX(0.76);">Speakers</span>
<div style="left:479.40px;top:98.30px;width:34.60px;height:16.10px;background:#0f1214;"></div>
<span class="t" style="left:480.90px;top:100px;font-size:4.6px;line-height:5px;color:#c4c8cc;font-weight:400;transform:scaleX(0.76);transform-origin:0 50%;">#1</span>
<span class="t" style="left:496.60px;top:107px;font-size:5.3px;line-height:6px;color:#c0c4c8;font-weight:400;transform:translateX(-50%) scaleX(0.79);">Sp 001</span>
<svg style="left:505px;top:99px;" width="9" height="9"><g transform="translate(0.000,0.900) scale(0.1000,0.1000) translate(-0.0,-0.0)"><path d="M5 23 H17 L34 8 V56 L17 41 H5 Z" fill="none" stroke="#c8cacc" stroke-width="7" stroke-linejoin="round"/><path d="M46 20 L70 44 M70 20 L46 44" stroke="#c8cacc" stroke-width="8" stroke-linecap="round"/></g></svg>
<div style="left:515.33px;top:98.30px;width:34.60px;height:16.10px;background:#0f1214;"></div>
<span class="t" style="left:516.83px;top:100px;font-size:4.6px;line-height:5px;color:#c4c8cc;font-weight:400;transform:scaleX(0.76);transform-origin:0 50%;">#2</span>
<span class="t" style="left:532.53px;top:107px;font-size:5.3px;line-height:6px;color:#c0c4c8;font-weight:400;transform:translateX(-50%) scaleX(0.79);">Sp 002</span>
<svg style="left:540px;top:99px;" width="10" height="9"><g transform="translate(0.930,0.900) scale(0.1000,0.1000) translate(-0.0,-0.0)"><path d="M5 23 H17 L34 8 V56 L17 41 H5 Z" fill="none" stroke="#c8cacc" stroke-width="7" stroke-linejoin="round"/><path d="M46 20 L70 44 M70 20 L46 44" stroke="#c8cacc" stroke-width="8" stroke-linecap="round"/></g></svg>
<div style="left:551.26px;top:98.30px;width:34.60px;height:16.10px;background:#0f1214;"></div>
<span class="t" style="left:552.76px;top:100px;font-size:4.6px;line-height:5px;color:#c4c8cc;font-weight:400;transform:scaleX(0.76);transform-origin:0 50%;">#3</span>
<span class="t" style="left:568.46px;top:107px;font-size:5.3px;line-height:6px;color:#c0c4c8;font-weight:400;transform:translateX(-50%) scaleX(0.79);">Sp 003</span>
<svg style="left:576px;top:99px;" width="10" height="9"><g transform="translate(0.860,0.900) scale(0.1000,0.1000) translate(-0.0,-0.0)"><path d="M5 23 H17 L34 8 V56 L17 41 H5 Z" fill="none" stroke="#c8cacc" stroke-width="7" stroke-linejoin="round"/><path d="M46 20 L70 44 M70 20 L46 44" stroke="#c8cacc" stroke-width="8" stroke-linecap="round"/></g></svg>
<div style="left:587.19px;top:98.30px;width:34.60px;height:16.10px;background:#0f1214;"></div>
<span class="t" style="left:588.69px;top:100px;font-size:4.6px;line-height:5px;color:#c4c8cc;font-weight:400;transform:scaleX(0.76);transform-origin:0 50%;">#4</span>
<span class="t" style="left:604.39px;top:107px;font-size:5.3px;line-height:6px;color:#c0c4c8;font-weight:400;transform:translateX(-50%) scaleX(0.79);">Sp 004</span>
<svg style="left:612px;top:99px;" width="10" height="9"><g transform="translate(0.790,0.900) scale(0.1000,0.1000) translate(-0.0,-0.0)"><path d="M5 23 H17 L34 8 V56 L17 41 H5 Z" fill="none" stroke="#c8cacc" stroke-width="7" stroke-linejoin="round"/><path d="M46 20 L70 44 M70 20 L46 44" stroke="#c8cacc" stroke-width="8" stroke-linecap="round"/></g></svg>
<div style="left:623.12px;top:98.30px;width:34.60px;height:16.10px;background:#0f1214;"></div>
<span class="t" style="left:624.62px;top:100px;font-size:4.6px;line-height:5px;color:#c4c8cc;font-weight:400;transform:scaleX(0.76);transform-origin:0 50%;">#5</span>
<span class="t" style="left:640.32px;top:107px;font-size:5.3px;line-height:6px;color:#c0c4c8;font-weight:400;transform:translateX(-50%) scaleX(0.79);">Sp 005</span>
<svg style="left:648px;top:99px;" width="10" height="9"><g transform="translate(0.720,0.900) scale(0.1000,0.1000) translate(-0.0,-0.0)"><path d="M5 23 H17 L34 8 V56 L17 41 H5 Z" fill="none" stroke="#c8cacc" stroke-width="7" stroke-linejoin="round"/><path d="M46 20 L70 44 M70 20 L46 44" stroke="#c8cacc" stroke-width="8" stroke-linecap="round"/></g></svg>
<div style="left:659.05px;top:98.30px;width:34.60px;height:16.10px;background:#f98560;"></div>
<span class="t" style="left:660.55px;top:100px;font-size:4.6px;line-height:5px;color:#7a2c16;font-weight:400;transform:scaleX(0.76);transform-origin:0 50%;">#6</span>
<span class="t" style="left:676.25px;top:107px;font-size:5.3px;line-height:6px;color:#8a3218;font-weight:400;transform:translateX(-50%) scaleX(0.79);">Sp 006</span>
<svg style="left:684px;top:99px;" width="10" height="9"><g transform="translate(0.650,0.900) scale(0.1000,0.1000) translate(-0.0,-0.0)"><path d="M5 23 H17 L34 8 V56 L17 41 H5 Z" fill="none" stroke="#6a2412" stroke-width="7" stroke-linejoin="round"/><path d="M46 20 L70 44 M70 20 L46 44" stroke="#6a2412" stroke-width="8" stroke-linecap="round"/></g></svg>
<div style="left:694.98px;top:98.30px;width:34.60px;height:16.10px;background:#f98560;"></div>
<span class="t" style="left:696.48px;top:100px;font-size:4.6px;line-height:5px;color:#7a2c16;font-weight:400;transform:scaleX(0.76);transform-origin:0 50%;">#7</span>
<span class="t" style="left:712.18px;top:107px;font-size:5.3px;line-height:6px;color:#8a3218;font-weight:400;transform:translateX(-50%) scaleX(0.79);">Sp 007</span>
<svg style="left:720px;top:99px;" width="10" height="9"><g transform="translate(0.580,0.900) scale(0.1000,0.1000) translate(-0.0,-0.0)"><path d="M5 23 H17 L34 8 V56 L17 41 H5 Z" fill="none" stroke="#6a2412" stroke-width="7" stroke-linejoin="round"/><path d="M46 20 L70 44 M70 20 L46 44" stroke="#6a2412" stroke-width="8" stroke-linecap="round"/></g></svg>
<div style="left:730.91px;top:98.30px;width:34.60px;height:16.10px;background:#f98560;"></div>
<span class="t" style="left:732.41px;top:100px;font-size:4.6px;line-height:5px;color:#7a2c16;font-weight:400;transform:scaleX(0.76);transform-origin:0 50%;">#8</span>
<span class="t" style="left:748.11px;top:107px;font-size:5.3px;line-height:6px;color:#8a3218;font-weight:400;transform:translateX(-50%) scaleX(0.79);">Sp 008</span>
<svg style="left:756px;top:99px;" width="10" height="9"><g transform="translate(0.510,0.900) scale(0.1000,0.1000) translate(-0.0,-0.0)"><path d="M5 23 H17 L34 8 V56 L17 41 H5 Z" fill="none" stroke="#6a2412" stroke-width="7" stroke-linejoin="round"/><path d="M46 20 L70 44 M70 20 L46 44" stroke="#6a2412" stroke-width="8" stroke-linecap="round"/></g></svg>
<div style="left:479.40px;top:115.95px;width:34.60px;height:16.10px;background:#f98560;"></div>
<span class="t" style="left:480.90px;top:118px;font-size:4.6px;line-height:5px;color:#7a2c16;font-weight:400;transform:scaleX(0.76);transform-origin:0 50%;">#9</span>
<span class="t" style="left:496.60px;top:125px;font-size:5.3px;line-height:6px;color:#8a3218;font-weight:400;transform:translateX(-50%) scaleX(0.79);">Sp 009</span>
<svg style="left:505px;top:117px;" width="9" height="8"><g transform="translate(0.000,0.550) scale(0.1000,0.1000) translate(-0.0,-0.0)"><path d="M5 23 H17 L34 8 V56 L17 41 H5 Z" fill="none" stroke="#6a2412" stroke-width="7" stroke-linejoin="round"/><path d="M46 20 L70 44 M70 20 L46 44" stroke="#6a2412" stroke-width="8" stroke-linecap="round"/></g></svg>
<div style="left:515.33px;top:115.95px;width:34.60px;height:16.10px;background:#f98560;"></div>
<span class="t" style="left:516.83px;top:118px;font-size:4.6px;line-height:5px;color:#7a2c16;font-weight:400;transform:scaleX(0.76);transform-origin:0 50%;">#10</span>
<span class="t" style="left:532.53px;top:125px;font-size:5.3px;line-height:6px;color:#8a3218;font-weight:400;transform:translateX(-50%) scaleX(0.79);">Sp 010</span>
<svg style="left:540px;top:117px;" width="10" height="8"><g transform="translate(0.930,0.550) scale(0.1000,0.1000) translate(-0.0,-0.0)"><path d="M5 23 H17 L34 8 V56 L17 41 H5 Z" fill="none" stroke="#6a2412" stroke-width="7" stroke-linejoin="round"/><path d="M46 20 L70 44 M70 20 L46 44" stroke="#6a2412" stroke-width="8" stroke-linecap="round"/></g></svg>
<div style="left:551.26px;top:115.95px;width:34.60px;height:16.10px;background:#f98560;"></div>
<span class="t" style="left:552.76px;top:118px;font-size:4.6px;line-height:5px;color:#7a2c16;font-weight:400;transform:scaleX(0.76);transform-origin:0 50%;">#11</span>
<span class="t" style="left:568.46px;top:125px;font-size:5.3px;line-height:6px;color:#8a3218;font-weight:400;transform:translateX(-50%) scaleX(0.79);">Sp 011</span>
<svg style="left:576px;top:117px;" width="10" height="8"><g transform="translate(0.860,0.550) scale(0.1000,0.1000) translate(-0.0,-0.0)"><path d="M5 23 H17 L34 8 V56 L17 41 H5 Z" fill="none" stroke="#6a2412" stroke-width="7" stroke-linejoin="round"/><path d="M46 20 L70 44 M70 20 L46 44" stroke="#6a2412" stroke-width="8" stroke-linecap="round"/></g></svg>
<div style="left:587.19px;top:115.95px;width:34.60px;height:16.10px;background:#f98560;"></div>
<span class="t" style="left:588.69px;top:118px;font-size:4.6px;line-height:5px;color:#7a2c16;font-weight:400;transform:scaleX(0.76);transform-origin:0 50%;">#12</span>
<span class="t" style="left:604.39px;top:125px;font-size:5.3px;line-height:6px;color:#8a3218;font-weight:400;transform:translateX(-50%) scaleX(0.79);">Sp 012</span>
<svg style="left:612px;top:117px;" width="10" height="8"><g transform="translate(0.790,0.550) scale(0.1000,0.1000) translate(-0.0,-0.0)"><path d="M5 23 H17 L34 8 V56 L17 41 H5 Z" fill="none" stroke="#6a2412" stroke-width="7" stroke-linejoin="round"/><path d="M46 20 L70 44 M70 20 L46 44" stroke="#6a2412" stroke-width="8" stroke-linecap="round"/></g></svg>
<div style="left:623.12px;top:115.95px;width:34.60px;height:16.10px;background:#f98560;"></div>
<span class="t" style="left:624.62px;top:118px;font-size:4.6px;line-height:5px;color:#7a2c16;font-weight:400;transform:scaleX(0.76);transform-origin:0 50%;">#13</span>
<span class="t" style="left:640.32px;top:125px;font-size:5.3px;line-height:6px;color:#8a3218;font-weight:400;transform:translateX(-50%) scaleX(0.79);">Sp 013</span>
<svg style="left:648px;top:117px;" width="10" height="8"><g transform="translate(0.720,0.550) scale(0.1000,0.1000) translate(-0.0,-0.0)"><path d="M5 23 H17 L34 8 V56 L17 41 H5 Z" fill="none" stroke="#6a2412" stroke-width="7" stroke-linejoin="round"/><path d="M46 20 L70 44 M70 20 L46 44" stroke="#6a2412" stroke-width="8" stroke-linecap="round"/></g></svg>
<div style="left:659.05px;top:115.95px;width:34.60px;height:16.10px;background:#f98560;"></div>
<span class="t" style="left:660.55px;top:118px;font-size:4.6px;line-height:5px;color:#7a2c16;font-weight:400;transform:scaleX(0.76);transform-origin:0 50%;">#14</span>
<span class="t" style="left:676.25px;top:125px;font-size:5.3px;line-height:6px;color:#8a3218;font-weight:400;transform:translateX(-50%) scaleX(0.79);">Sp 014</span>
<svg style="left:684px;top:117px;" width="10" height="8"><g transform="translate(0.650,0.550) scale(0.1000,0.1000) translate(-0.0,-0.0)"><path d="M5 23 H17 L34 8 V56 L17 41 H5 Z" fill="none" stroke="#6a2412" stroke-width="7" stroke-linejoin="round"/><path d="M46 20 L70 44 M70 20 L46 44" stroke="#6a2412" stroke-width="8" stroke-linecap="round"/></g></svg>
<div style="left:694.98px;top:115.95px;width:34.60px;height:16.10px;background:#f98560;"></div>
<span class="t" style="left:696.48px;top:118px;font-size:4.6px;line-height:5px;color:#7a2c16;font-weight:400;transform:scaleX(0.76);transform-origin:0 50%;">#15</span>
<span class="t" style="left:712.18px;top:125px;font-size:5.3px;line-height:6px;color:#8a3218;font-weight:400;transform:translateX(-50%) scaleX(0.79);">Sp 015</span>
<svg style="left:720px;top:117px;" width="10" height="8"><g transform="translate(0.580,0.550) scale(0.1000,0.1000) translate(-0.0,-0.0)"><path d="M5 23 H17 L34 8 V56 L17 41 H5 Z" fill="none" stroke="#6a2412" stroke-width="7" stroke-linejoin="round"/><path d="M46 20 L70 44 M70 20 L46 44" stroke="#6a2412" stroke-width="8" stroke-linecap="round"/></g></svg>
<div style="left:730.91px;top:115.95px;width:34.60px;height:16.10px;background:#0f1214;"></div>
<span class="t" style="left:732.41px;top:118px;font-size:4.6px;line-height:5px;color:#c4c8cc;font-weight:400;transform:scaleX(0.76);transform-origin:0 50%;">#16</span>
<span class="t" style="left:748.11px;top:125px;font-size:5.3px;line-height:6px;color:#c0c4c8;font-weight:400;transform:translateX(-50%) scaleX(0.79);">Sp 016</span>
<svg style="left:756px;top:117px;" width="10" height="8"><g transform="translate(0.510,0.550) scale(0.1000,0.1000) translate(-0.0,-0.0)"><path d="M8 24 H22 L42 8 V56 L22 40 H8 Z" fill="none" stroke="#42474d" stroke-width="6" stroke-linejoin="round"/><path d="M52 24 q8 8 0 16 M60 18 q12 14 0 28" stroke="#42474d" stroke-width="5" fill="none" stroke-linecap="round"/></g></svg>
<div style="left:479.40px;top:133.60px;width:34.60px;height:16.10px;background:#0f1214;"></div>
<span class="t" style="left:480.90px;top:136px;font-size:4.6px;line-height:5px;color:#c4c8cc;font-weight:400;transform:scaleX(0.76);transform-origin:0 50%;">#17</span>
<span class="t" style="left:496.60px;top:143px;font-size:5.3px;line-height:6px;color:#c0c4c8;font-weight:400;transform:translateX(-50%) scaleX(0.79);">Sp 017</span>
<svg style="left:505px;top:135px;" width="9" height="8"><g transform="translate(0.000,0.200) scale(0.1000,0.1000) translate(-0.0,-0.0)"><path d="M8 24 H22 L42 8 V56 L22 40 H8 Z" fill="none" stroke="#42474d" stroke-width="6" stroke-linejoin="round"/><path d="M52 24 q8 8 0 16 M60 18 q12 14 0 28" stroke="#42474d" stroke-width="5" fill="none" stroke-linecap="round"/></g></svg>
<div style="left:515.33px;top:133.60px;width:34.60px;height:16.10px;background:#0f1214;"></div>
<span class="t" style="left:516.83px;top:136px;font-size:4.6px;line-height:5px;color:#c4c8cc;font-weight:400;transform:scaleX(0.76);transform-origin:0 50%;">#18</span>
<span class="t" style="left:532.53px;top:143px;font-size:5.3px;line-height:6px;color:#c0c4c8;font-weight:400;transform:translateX(-50%) scaleX(0.79);">Sp 018</span>
<svg style="left:540px;top:135px;" width="10" height="8"><g transform="translate(0.930,0.200) scale(0.1000,0.1000) translate(-0.0,-0.0)"><path d="M8 24 H22 L42 8 V56 L22 40 H8 Z" fill="none" stroke="#42474d" stroke-width="6" stroke-linejoin="round"/><path d="M52 24 q8 8 0 16 M60 18 q12 14 0 28" stroke="#42474d" stroke-width="5" fill="none" stroke-linecap="round"/></g></svg>
<div style="left:551.26px;top:133.60px;width:34.60px;height:16.10px;background:#0f1214;"></div>
<span class="t" style="left:552.76px;top:136px;font-size:4.6px;line-height:5px;color:#c4c8cc;font-weight:400;transform:scaleX(0.76);transform-origin:0 50%;">#19</span>
<span class="t" style="left:568.46px;top:143px;font-size:5.3px;line-height:6px;color:#c0c4c8;font-weight:400;transform:translateX(-50%) scaleX(0.79);">Sp 019</span>
<svg style="left:576px;top:135px;" width="10" height="8"><g transform="translate(0.860,0.200) scale(0.1000,0.1000) translate(-0.0,-0.0)"><path d="M8 24 H22 L42 8 V56 L22 40 H8 Z" fill="none" stroke="#42474d" stroke-width="6" stroke-linejoin="round"/><path d="M52 24 q8 8 0 16 M60 18 q12 14 0 28" stroke="#42474d" stroke-width="5" fill="none" stroke-linecap="round"/></g></svg>
<div style="left:587.19px;top:133.60px;width:34.60px;height:16.10px;background:#0f1214;"></div>
<span class="t" style="left:588.69px;top:136px;font-size:4.6px;line-height:5px;color:#c4c8cc;font-weight:400;transform:scaleX(0.76);transform-origin:0 50%;">#20</span>
<span class="t" style="left:604.39px;top:143px;font-size:5.3px;line-height:6px;color:#c0c4c8;font-weight:400;transform:translateX(-50%) scaleX(0.79);">Sp 020</span>
<svg style="left:612px;top:135px;" width="10" height="8"><g transform="translate(0.790,0.200) scale(0.1000,0.1000) translate(-0.0,-0.0)"><path d="M8 24 H22 L42 8 V56 L22 40 H8 Z" fill="none" stroke="#42474d" stroke-width="6" stroke-linejoin="round"/><path d="M52 24 q8 8 0 16 M60 18 q12 14 0 28" stroke="#42474d" stroke-width="5" fill="none" stroke-linecap="round"/></g></svg>
<div style="left:623.12px;top:133.60px;width:34.60px;height:16.10px;background:#0f1214;"></div>
<span class="t" style="left:624.62px;top:136px;font-size:4.6px;line-height:5px;color:#c4c8cc;font-weight:400;transform:scaleX(0.76);transform-origin:0 50%;">#21</span>
<span class="t" style="left:640.32px;top:143px;font-size:5.3px;line-height:6px;color:#c0c4c8;font-weight:400;transform:translateX(-50%) scaleX(0.79);">Sp 021</span>
<svg style="left:648px;top:135px;" width="10" height="8"><g transform="translate(0.720,0.200) scale(0.1000,0.1000) translate(-0.0,-0.0)"><path d="M8 24 H22 L42 8 V56 L22 40 H8 Z" fill="none" stroke="#42474d" stroke-width="6" stroke-linejoin="round"/><path d="M52 24 q8 8 0 16 M60 18 q12 14 0 28" stroke="#42474d" stroke-width="5" fill="none" stroke-linecap="round"/></g></svg>
<div style="left:659.05px;top:133.60px;width:34.60px;height:16.10px;background:#0f1214;"></div>
<span class="t" style="left:660.55px;top:136px;font-size:4.6px;line-height:5px;color:#c4c8cc;font-weight:400;transform:scaleX(0.76);transform-origin:0 50%;">#22</span>
<span class="t" style="left:676.25px;top:143px;font-size:5.3px;line-height:6px;color:#c0c4c8;font-weight:400;transform:translateX(-50%) scaleX(0.79);">Sp 022</span>
<svg style="left:684px;top:135px;" width="10" height="8"><g transform="translate(0.650,0.200) scale(0.1000,0.1000) translate(-0.0,-0.0)"><path d="M8 24 H22 L42 8 V56 L22 40 H8 Z" fill="none" stroke="#42474d" stroke-width="6" stroke-linejoin="round"/><path d="M52 24 q8 8 0 16 M60 18 q12 14 0 28" stroke="#42474d" stroke-width="5" fill="none" stroke-linecap="round"/></g></svg>
<div style="left:694.98px;top:133.60px;width:34.60px;height:16.10px;background:#0f1214;"></div>
<span class="t" style="left:696.48px;top:136px;font-size:4.6px;line-height:5px;color:#c4c8cc;font-weight:400;transform:scaleX(0.76);transform-origin:0 50%;">#23</span>
<span class="t" style="left:712.18px;top:143px;font-size:5.3px;line-height:6px;color:#c0c4c8;font-weight:400;transform:translateX(-50%) scaleX(0.79);">Sp 023</span>
<svg style="left:720px;top:135px;" width="10" height="8"><g transform="translate(0.580,0.200) scale(0.1000,0.1000) translate(-0.0,-0.0)"><path d="M8 24 H22 L42 8 V56 L22 40 H8 Z" fill="none" stroke="#42474d" stroke-width="6" stroke-linejoin="round"/><path d="M52 24 q8 8 0 16 M60 18 q12 14 0 28" stroke="#42474d" stroke-width="5" fill="none" stroke-linecap="round"/></g></svg>
<div style="left:730.91px;top:133.60px;width:34.60px;height:16.10px;background:#0f1214;"></div>
<span class="t" style="left:732.41px;top:136px;font-size:4.6px;line-height:5px;color:#c4c8cc;font-weight:400;transform:scaleX(0.76);transform-origin:0 50%;">#24</span>
<span class="t" style="left:748.11px;top:143px;font-size:5.3px;line-height:6px;color:#c0c4c8;font-weight:400;transform:translateX(-50%) scaleX(0.79);">Sp 024</span>
<svg style="left:756px;top:135px;" width="10" height="8"><g transform="translate(0.510,0.200) scale(0.1000,0.1000) translate(-0.0,-0.0)"><path d="M8 24 H22 L42 8 V56 L22 40 H8 Z" fill="none" stroke="#42474d" stroke-width="6" stroke-linejoin="round"/><path d="M52 24 q8 8 0 16 M60 18 q12 14 0 28" stroke="#42474d" stroke-width="5" fill="none" stroke-linecap="round"/></g></svg>
<div style="left:479.40px;top:151.25px;width:34.60px;height:16.10px;background:#0f1214;"></div>
<span class="t" style="left:480.90px;top:153px;font-size:4.6px;line-height:5px;color:#c4c8cc;font-weight:400;transform:scaleX(0.76);transform-origin:0 50%;">#25</span>
<span class="t" style="left:496.60px;top:160px;font-size:5.3px;line-height:6px;color:#c0c4c8;font-weight:400;transform:translateX(-50%) scaleX(0.79);">Sp 025</span>
<svg style="left:505px;top:152px;" width="9" height="9"><g transform="translate(0.000,0.850) scale(0.1000,0.1000) translate(-0.0,-0.0)"><path d="M8 24 H22 L42 8 V56 L22 40 H8 Z" fill="none" stroke="#42474d" stroke-width="6" stroke-linejoin="round"/><path d="M52 24 q8 8 0 16 M60 18 q12 14 0 28" stroke="#42474d" stroke-width="5" fill="none" stroke-linecap="round"/></g></svg>
<div style="left:515.33px;top:151.25px;width:34.60px;height:16.10px;background:#0f1214;"></div>
<span class="t" style="left:516.83px;top:153px;font-size:4.6px;line-height:5px;color:#c4c8cc;font-weight:400;transform:scaleX(0.76);transform-origin:0 50%;">#26</span>
<span class="t" style="left:532.53px;top:160px;font-size:5.3px;line-height:6px;color:#c0c4c8;font-weight:400;transform:translateX(-50%) scaleX(0.79);">Sp 026</span>
<svg style="left:540px;top:152px;" width="10" height="9"><g transform="translate(0.930,0.850) scale(0.1000,0.1000) translate(-0.0,-0.0)"><path d="M8 24 H22 L42 8 V56 L22 40 H8 Z" fill="none" stroke="#42474d" stroke-width="6" stroke-linejoin="round"/><path d="M52 24 q8 8 0 16 M60 18 q12 14 0 28" stroke="#42474d" stroke-width="5" fill="none" stroke-linecap="round"/></g></svg>
<div style="left:551.26px;top:151.25px;width:34.60px;height:16.10px;background:#0f1214;"></div>
<span class="t" style="left:552.76px;top:153px;font-size:4.6px;line-height:5px;color:#c4c8cc;font-weight:400;transform:scaleX(0.76);transform-origin:0 50%;">#27</span>
<span class="t" style="left:568.46px;top:160px;font-size:5.3px;line-height:6px;color:#c0c4c8;font-weight:400;transform:translateX(-50%) scaleX(0.79);">Sp 027</span>
<svg style="left:576px;top:152px;" width="10" height="9"><g transform="translate(0.860,0.850) scale(0.1000,0.1000) translate(-0.0,-0.0)"><path d="M8 24 H22 L42 8 V56 L22 40 H8 Z" fill="none" stroke="#42474d" stroke-width="6" stroke-linejoin="round"/><path d="M52 24 q8 8 0 16 M60 18 q12 14 0 28" stroke="#42474d" stroke-width="5" fill="none" stroke-linecap="round"/></g></svg>
<div style="left:587.19px;top:151.25px;width:34.60px;height:16.10px;background:#0f1214;"></div>
<span class="t" style="left:588.69px;top:153px;font-size:4.6px;line-height:5px;color:#c4c8cc;font-weight:400;transform:scaleX(0.76);transform-origin:0 50%;">#28</span>
<span class="t" style="left:604.39px;top:160px;font-size:5.3px;line-height:6px;color:#c0c4c8;font-weight:400;transform:translateX(-50%) scaleX(0.79);">Sp 028</span>
<svg style="left:612px;top:152px;" width="10" height="9"><g transform="translate(0.790,0.850) scale(0.1000,0.1000) translate(-0.0,-0.0)"><path d="M8 24 H22 L42 8 V56 L22 40 H8 Z" fill="none" stroke="#42474d" stroke-width="6" stroke-linejoin="round"/><path d="M52 24 q8 8 0 16 M60 18 q12 14 0 28" stroke="#42474d" stroke-width="5" fill="none" stroke-linecap="round"/></g></svg>
<div style="left:623.12px;top:151.25px;width:34.60px;height:16.10px;background:#0f1214;"></div>
<span class="t" style="left:624.62px;top:153px;font-size:4.6px;line-height:5px;color:#c4c8cc;font-weight:400;transform:scaleX(0.76);transform-origin:0 50%;">#29</span>
<span class="t" style="left:640.32px;top:160px;font-size:5.3px;line-height:6px;color:#c0c4c8;font-weight:400;transform:translateX(-50%) scaleX(0.79);">Sp 029</span>
<svg style="left:648px;top:152px;" width="10" height="9"><g transform="translate(0.720,0.850) scale(0.1000,0.1000) translate(-0.0,-0.0)"><path d="M8 24 H22 L42 8 V56 L22 40 H8 Z" fill="none" stroke="#42474d" stroke-width="6" stroke-linejoin="round"/><path d="M52 24 q8 8 0 16 M60 18 q12 14 0 28" stroke="#42474d" stroke-width="5" fill="none" stroke-linecap="round"/></g></svg>
<div style="left:659.05px;top:151.25px;width:34.60px;height:16.10px;background:#0f1214;"></div>
<span class="t" style="left:660.55px;top:153px;font-size:4.6px;line-height:5px;color:#c4c8cc;font-weight:400;transform:scaleX(0.76);transform-origin:0 50%;">#30</span>
<span class="t" style="left:676.25px;top:160px;font-size:5.3px;line-height:6px;color:#c0c4c8;font-weight:400;transform:translateX(-50%) scaleX(0.79);">Sp 030</span>
<svg style="left:684px;top:152px;" width="10" height="9"><g transform="translate(0.650,0.850) scale(0.1000,0.1000) translate(-0.0,-0.0)"><path d="M8 24 H22 L42 8 V56 L22 40 H8 Z" fill="none" stroke="#42474d" stroke-width="6" stroke-linejoin="round"/><path d="M52 24 q8 8 0 16 M60 18 q12 14 0 28" stroke="#42474d" stroke-width="5" fill="none" stroke-linecap="round"/></g></svg>
<div style="left:694.98px;top:151.25px;width:34.60px;height:16.10px;background:#0f1214;"></div>
<span class="t" style="left:696.48px;top:153px;font-size:4.6px;line-height:5px;color:#c4c8cc;font-weight:400;transform:scaleX(0.76);transform-origin:0 50%;">#31</span>
<span class="t" style="left:712.18px;top:160px;font-size:5.3px;line-height:6px;color:#c0c4c8;font-weight:400;transform:translateX(-50%) scaleX(0.79);">Sp 031</span>
<svg style="left:720px;top:152px;" width="10" height="9"><g transform="translate(0.580,0.850) scale(0.1000,0.1000) translate(-0.0,-0.0)"><path d="M8 24 H22 L42 8 V56 L22 40 H8 Z" fill="none" stroke="#42474d" stroke-width="6" stroke-linejoin="round"/><path d="M52 24 q8 8 0 16 M60 18 q12 14 0 28" stroke="#42474d" stroke-width="5" fill="none" stroke-linecap="round"/></g></svg>
<div style="left:730.91px;top:151.25px;width:34.60px;height:16.10px;background:#0f1214;"></div>
<span class="t" style="left:732.41px;top:153px;font-size:4.6px;line-height:5px;color:#c4c8cc;font-weight:400;transform:scaleX(0.76);transform-origin:0 50%;">#32</span>
<span class="t" style="left:748.11px;top:160px;font-size:5.3px;line-height:6px;color:#c0c4c8;font-weight:400;transform:translateX(-50%) scaleX(0.79);">Sp 032</span>
<svg style="left:756px;top:152px;" width="10" height="9"><g transform="translate(0.510,0.850) scale(0.1000,0.1000) translate(-0.0,-0.0)"><path d="M8 24 H22 L42 8 V56 L22 40 H8 Z" fill="none" stroke="#42474d" stroke-width="6" stroke-linejoin="round"/><path d="M52 24 q8 8 0 16 M60 18 q12 14 0 28" stroke="#42474d" stroke-width="5" fill="none" stroke-linecap="round"/></g></svg>
<div style="left:479.40px;top:168.90px;width:34.60px;height:16.10px;background:#0f1214;"></div>
<span class="t" style="left:480.90px;top:171px;font-size:4.6px;line-height:5px;color:#c4c8cc;font-weight:400;transform:scaleX(0.76);transform-origin:0 50%;">#33</span>
<span class="t" style="left:496.60px;top:178px;font-size:5.3px;line-height:6px;color:#c0c4c8;font-weight:400;transform:translateX(-50%) scaleX(0.79);">Sp 033</span>
<svg style="left:505px;top:170px;" width="9" height="8"><g transform="translate(0.000,0.500) scale(0.1000,0.1000) translate(-0.0,-0.0)"><path d="M8 24 H22 L42 8 V56 L22 40 H8 Z" fill="none" stroke="#42474d" stroke-width="6" stroke-linejoin="round"/><path d="M52 24 q8 8 0 16 M60 18 q12 14 0 28" stroke="#42474d" stroke-width="5" fill="none" stroke-linecap="round"/></g></svg>
<div style="left:515.33px;top:168.90px;width:34.60px;height:16.10px;background:#0f1214;"></div>
<span class="t" style="left:516.83px;top:171px;font-size:4.6px;line-height:5px;color:#c4c8cc;font-weight:400;transform:scaleX(0.76);transform-origin:0 50%;">#34</span>
<span class="t" style="left:532.53px;top:178px;font-size:5.3px;line-height:6px;color:#c0c4c8;font-weight:400;transform:translateX(-50%) scaleX(0.79);">Sp 034</span>
<svg style="left:540px;top:170px;" width="10" height="8"><g transform="translate(0.930,0.500) scale(0.1000,0.1000) translate(-0.0,-0.0)"><path d="M8 24 H22 L42 8 V56 L22 40 H8 Z" fill="none" stroke="#42474d" stroke-width="6" stroke-linejoin="round"/><path d="M52 24 q8 8 0 16 M60 18 q12 14 0 28" stroke="#42474d" stroke-width="5" fill="none" stroke-linecap="round"/></g></svg>
<div style="left:551.26px;top:168.90px;width:34.60px;height:16.10px;background:#0f1214;"></div>
<span class="t" style="left:552.76px;top:171px;font-size:4.6px;line-height:5px;color:#c4c8cc;font-weight:400;transform:scaleX(0.76);transform-origin:0 50%;">#35</span>
<span class="t" style="left:568.46px;top:178px;font-size:5.3px;line-height:6px;color:#c0c4c8;font-weight:400;transform:translateX(-50%) scaleX(0.79);">Sp 035</span>
<svg style="left:576px;top:170px;" width="10" height="8"><g transform="translate(0.860,0.500) scale(0.1000,0.1000) translate(-0.0,-0.0)"><path d="M8 24 H22 L42 8 V56 L22 40 H8 Z" fill="none" stroke="#42474d" stroke-width="6" stroke-linejoin="round"/><path d="M52 24 q8 8 0 16 M60 18 q12 14 0 28" stroke="#42474d" stroke-width="5" fill="none" stroke-linecap="round"/></g></svg>
<div style="left:587.19px;top:168.90px;width:34.60px;height:16.10px;background:#0f1214;"></div>
<span class="t" style="left:588.69px;top:171px;font-size:4.6px;line-height:5px;color:#c4c8cc;font-weight:400;transform:scaleX(0.76);transform-origin:0 50%;">#36</span>
<span class="t" style="left:604.39px;top:178px;font-size:5.3px;line-height:6px;color:#c0c4c8;font-weight:400;transform:translateX(-50%) scaleX(0.79);">Sp 036</span>
<svg style="left:612px;top:170px;" width="10" height="8"><g transform="translate(0.790,0.500) scale(0.1000,0.1000) translate(-0.0,-0.0)"><path d="M8 24 H22 L42 8 V56 L22 40 H8 Z" fill="none" stroke="#42474d" stroke-width="6" stroke-linejoin="round"/><path d="M52 24 q8 8 0 16 M60 18 q12 14 0 28" stroke="#42474d" stroke-width="5" fill="none" stroke-linecap="round"/></g></svg>
<div style="left:623.12px;top:168.90px;width:34.60px;height:16.10px;background:#0f1214;"></div>
<span class="t" style="left:624.62px;top:171px;font-size:4.6px;line-height:5px;color:#c4c8cc;font-weight:400;transform:scaleX(0.76);transform-origin:0 50%;">#37</span>
<span class="t" style="left:640.32px;top:178px;font-size:5.3px;line-height:6px;color:#c0c4c8;font-weight:400;transform:translateX(-50%) scaleX(0.79);">Sp 037</span>
<svg style="left:648px;top:170px;" width="10" height="8"><g transform="translate(0.720,0.500) scale(0.1000,0.1000) translate(-0.0,-0.0)"><path d="M8 24 H22 L42 8 V56 L22 40 H8 Z" fill="none" stroke="#42474d" stroke-width="6" stroke-linejoin="round"/><path d="M52 24 q8 8 0 16 M60 18 q12 14 0 28" stroke="#42474d" stroke-width="5" fill="none" stroke-linecap="round"/></g></svg>
<div style="left:659.05px;top:168.90px;width:34.60px;height:16.10px;background:#0f1214;"></div>
<span class="t" style="left:660.55px;top:171px;font-size:4.6px;line-height:5px;color:#c4c8cc;font-weight:400;transform:scaleX(0.76);transform-origin:0 50%;">#38</span>
<span class="t" style="left:676.25px;top:178px;font-size:5.3px;line-height:6px;color:#c0c4c8;font-weight:400;transform:translateX(-50%) scaleX(0.79);">Sp 038</span>
<svg style="left:684px;top:170px;" width="10" height="8"><g transform="translate(0.650,0.500) scale(0.1000,0.1000) translate(-0.0,-0.0)"><path d="M8 24 H22 L42 8 V56 L22 40 H8 Z" fill="none" stroke="#42474d" stroke-width="6" stroke-linejoin="round"/><path d="M52 24 q8 8 0 16 M60 18 q12 14 0 28" stroke="#42474d" stroke-width="5" fill="none" stroke-linecap="round"/></g></svg>
<div style="left:694.98px;top:168.90px;width:34.60px;height:16.10px;background:#0f1214;"></div>
<span class="t" style="left:696.48px;top:171px;font-size:4.6px;line-height:5px;color:#c4c8cc;font-weight:400;transform:scaleX(0.76);transform-origin:0 50%;">#39</span>
<span class="t" style="left:712.18px;top:178px;font-size:5.3px;line-height:6px;color:#c0c4c8;font-weight:400;transform:translateX(-50%) scaleX(0.79);">Sp 039</span>
<svg style="left:720px;top:170px;" width="10" height="8"><g transform="translate(0.580,0.500) scale(0.1000,0.1000) translate(-0.0,-0.0)"><path d="M8 24 H22 L42 8 V56 L22 40 H8 Z" fill="none" stroke="#42474d" stroke-width="6" stroke-linejoin="round"/><path d="M52 24 q8 8 0 16 M60 18 q12 14 0 28" stroke="#42474d" stroke-width="5" fill="none" stroke-linecap="round"/></g></svg>
<div style="left:730.91px;top:168.90px;width:34.60px;height:16.10px;background:#0f1214;"></div>
<span class="t" style="left:732.41px;top:171px;font-size:4.6px;line-height:5px;color:#c4c8cc;font-weight:400;transform:scaleX(0.76);transform-origin:0 50%;">#40</span>
<span class="t" style="left:748.11px;top:178px;font-size:5.3px;line-height:6px;color:#c0c4c8;font-weight:400;transform:translateX(-50%) scaleX(0.79);">Sp 040</span>
<svg style="left:756px;top:170px;" width="10" height="8"><g transform="translate(0.510,0.500) scale(0.1000,0.1000) translate(-0.0,-0.0)"><path d="M8 24 H22 L42 8 V56 L22 40 H8 Z" fill="none" stroke="#42474d" stroke-width="6" stroke-linejoin="round"/><path d="M52 24 q8 8 0 16 M60 18 q12 14 0 28" stroke="#42474d" stroke-width="5" fill="none" stroke-linecap="round"/></g></svg>
<div style="left:479.40px;top:186.55px;width:34.60px;height:16.10px;background:#0f1214;"></div>
<span class="t" style="left:480.90px;top:189px;font-size:4.6px;line-height:5px;color:#c4c8cc;font-weight:400;transform:scaleX(0.76);transform-origin:0 50%;">#41</span>
<span class="t" style="left:496.60px;top:196px;font-size:5.3px;line-height:6px;color:#c0c4c8;font-weight:400;transform:translateX(-50%) scaleX(0.79);">Sp 041</span>
<svg style="left:505px;top:188px;" width="9" height="8"><g transform="translate(0.000,0.150) scale(0.1000,0.1000) translate(-0.0,-0.0)"><path d="M8 24 H22 L42 8 V56 L22 40 H8 Z" fill="none" stroke="#42474d" stroke-width="6" stroke-linejoin="round"/><path d="M52 24 q8 8 0 16 M60 18 q12 14 0 28" stroke="#42474d" stroke-width="5" fill="none" stroke-linecap="round"/></g></svg>
<div style="left:515.33px;top:186.55px;width:34.60px;height:16.10px;background:#0f1214;"></div>
<span class="t" style="left:516.83px;top:189px;font-size:4.6px;line-height:5px;color:#c4c8cc;font-weight:400;transform:scaleX(0.76);transform-origin:0 50%;">#42</span>
<span class="t" style="left:532.53px;top:196px;font-size:5.3px;line-height:6px;color:#c0c4c8;font-weight:400;transform:translateX(-50%) scaleX(0.79);">Sp 042</span>
<svg style="left:540px;top:188px;" width="10" height="8"><g transform="translate(0.930,0.150) scale(0.1000,0.1000) translate(-0.0,-0.0)"><path d="M8 24 H22 L42 8 V56 L22 40 H8 Z" fill="none" stroke="#42474d" stroke-width="6" stroke-linejoin="round"/><path d="M52 24 q8 8 0 16 M60 18 q12 14 0 28" stroke="#42474d" stroke-width="5" fill="none" stroke-linecap="round"/></g></svg>
<div style="left:551.26px;top:186.55px;width:34.60px;height:16.10px;background:#0f1214;"></div>
<span class="t" style="left:552.76px;top:189px;font-size:4.6px;line-height:5px;color:#c4c8cc;font-weight:400;transform:scaleX(0.76);transform-origin:0 50%;">#43</span>
<span class="t" style="left:568.46px;top:196px;font-size:5.3px;line-height:6px;color:#c0c4c8;font-weight:400;transform:translateX(-50%) scaleX(0.79);">Sp 043</span>
<svg style="left:576px;top:188px;" width="10" height="8"><g transform="translate(0.860,0.150) scale(0.1000,0.1000) translate(-0.0,-0.0)"><path d="M8 24 H22 L42 8 V56 L22 40 H8 Z" fill="none" stroke="#42474d" stroke-width="6" stroke-linejoin="round"/><path d="M52 24 q8 8 0 16 M60 18 q12 14 0 28" stroke="#42474d" stroke-width="5" fill="none" stroke-linecap="round"/></g></svg>
<div style="left:587.19px;top:186.55px;width:34.60px;height:16.10px;background:#0f1214;"></div>
<span class="t" style="left:588.69px;top:189px;font-size:4.6px;line-height:5px;color:#c4c8cc;font-weight:400;transform:scaleX(0.76);transform-origin:0 50%;">#44</span>
<span class="t" style="left:604.39px;top:196px;font-size:5.3px;line-height:6px;color:#c0c4c8;font-weight:400;transform:translateX(-50%) scaleX(0.79);">Sp 044</span>
<svg style="left:612px;top:188px;" width="10" height="8"><g transform="translate(0.790,0.150) scale(0.1000,0.1000) translate(-0.0,-0.0)"><path d="M8 24 H22 L42 8 V56 L22 40 H8 Z" fill="none" stroke="#42474d" stroke-width="6" stroke-linejoin="round"/><path d="M52 24 q8 8 0 16 M60 18 q12 14 0 28" stroke="#42474d" stroke-width="5" fill="none" stroke-linecap="round"/></g></svg>
<div style="left:623.12px;top:186.55px;width:34.60px;height:16.10px;background:#0f1214;"></div>
<span class="t" style="left:624.62px;top:189px;font-size:4.6px;line-height:5px;color:#c4c8cc;font-weight:400;transform:scaleX(0.76);transform-origin:0 50%;">#45</span>
<span class="t" style="left:640.32px;top:196px;font-size:5.3px;line-height:6px;color:#c0c4c8;font-weight:400;transform:translateX(-50%) scaleX(0.79);">Sp 045</span>
<svg style="left:648px;top:188px;" width="10" height="8"><g transform="translate(0.720,0.150) scale(0.1000,0.1000) translate(-0.0,-0.0)"><path d="M8 24 H22 L42 8 V56 L22 40 H8 Z" fill="none" stroke="#42474d" stroke-width="6" stroke-linejoin="round"/><path d="M52 24 q8 8 0 16 M60 18 q12 14 0 28" stroke="#42474d" stroke-width="5" fill="none" stroke-linecap="round"/></g></svg>
<div style="left:659.05px;top:186.55px;width:34.60px;height:16.10px;background:#0f1214;"></div>
<span class="t" style="left:660.55px;top:189px;font-size:4.6px;line-height:5px;color:#c4c8cc;font-weight:400;transform:scaleX(0.76);transform-origin:0 50%;">#46</span>
<span class="t" style="left:676.25px;top:196px;font-size:5.3px;line-height:6px;color:#c0c4c8;font-weight:400;transform:translateX(-50%) scaleX(0.79);">Sp 046</span>
<svg style="left:684px;top:188px;" width="10" height="8"><g transform="translate(0.650,0.150) scale(0.1000,0.1000) translate(-0.0,-0.0)"><path d="M8 24 H22 L42 8 V56 L22 40 H8 Z" fill="none" stroke="#42474d" stroke-width="6" stroke-linejoin="round"/><path d="M52 24 q8 8 0 16 M60 18 q12 14 0 28" stroke="#42474d" stroke-width="5" fill="none" stroke-linecap="round"/></g></svg>
<div style="left:694.98px;top:186.55px;width:34.60px;height:16.10px;background:#0f1214;"></div>
<span class="t" style="left:696.48px;top:189px;font-size:4.6px;line-height:5px;color:#c4c8cc;font-weight:400;transform:scaleX(0.76);transform-origin:0 50%;">#47</span>
<span class="t" style="left:712.18px;top:196px;font-size:5.3px;line-height:6px;color:#c0c4c8;font-weight:400;transform:translateX(-50%) scaleX(0.79);">Sp 047</span>
<svg style="left:720px;top:188px;" width="10" height="8"><g transform="translate(0.580,0.150) scale(0.1000,0.1000) translate(-0.0,-0.0)"><path d="M8 24 H22 L42 8 V56 L22 40 H8 Z" fill="none" stroke="#42474d" stroke-width="6" stroke-linejoin="round"/><path d="M52 24 q8 8 0 16 M60 18 q12 14 0 28" stroke="#42474d" stroke-width="5" fill="none" stroke-linecap="round"/></g></svg>
<div style="left:730.91px;top:186.55px;width:34.60px;height:16.10px;background:#0f1214;"></div>
<span class="t" style="left:732.41px;top:189px;font-size:4.6px;line-height:5px;color:#c4c8cc;font-weight:400;transform:scaleX(0.76);transform-origin:0 50%;">#48</span>
<span class="t" style="left:748.11px;top:196px;font-size:5.3px;line-height:6px;color:#c0c4c8;font-weight:400;transform:translateX(-50%) scaleX(0.79);">Sp 048</span>
<svg style="left:756px;top:188px;" width="10" height="8"><g transform="translate(0.510,0.150) scale(0.1000,0.1000) translate(-0.0,-0.0)"><path d="M8 24 H22 L42 8 V56 L22 40 H8 Z" fill="none" stroke="#42474d" stroke-width="6" stroke-linejoin="round"/><path d="M52 24 q8 8 0 16 M60 18 q12 14 0 28" stroke="#42474d" stroke-width="5" fill="none" stroke-linecap="round"/></g></svg>
<div style="left:479.40px;top:204.20px;width:34.60px;height:16.10px;background:#0f1214;"></div>
<span class="t" style="left:480.90px;top:206px;font-size:4.6px;line-height:5px;color:#c4c8cc;font-weight:400;transform:scaleX(0.76);transform-origin:0 50%;">#49</span>
<span class="t" style="left:496.60px;top:213px;font-size:5.3px;line-height:6px;color:#c0c4c8;font-weight:400;transform:translateX(-50%) scaleX(0.79);">Sp 049</span>
<svg style="left:505px;top:205px;" width="9" height="9"><g transform="translate(0.000,0.800) scale(0.1000,0.1000) translate(-0.0,-0.0)"><path d="M8 24 H22 L42 8 V56 L22 40 H8 Z" fill="none" stroke="#42474d" stroke-width="6" stroke-linejoin="round"/><path d="M52 24 q8 8 0 16 M60 18 q12 14 0 28" stroke="#42474d" stroke-width="5" fill="none" stroke-linecap="round"/></g></svg>
<div style="left:515.33px;top:204.20px;width:34.60px;height:16.10px;background:#0f1214;"></div>
<span class="t" style="left:516.83px;top:206px;font-size:4.6px;line-height:5px;color:#c4c8cc;font-weight:400;transform:scaleX(0.76);transform-origin:0 50%;">#50</span>
<span class="t" style="left:532.53px;top:213px;font-size:5.3px;line-height:6px;color:#c0c4c8;font-weight:400;transform:translateX(-50%) scaleX(0.79);">Sp 050</span>
<svg style="left:540px;top:205px;" width="10" height="9"><g transform="translate(0.930,0.800) scale(0.1000,0.1000) translate(-0.0,-0.0)"><path d="M8 24 H22 L42 8 V56 L22 40 H8 Z" fill="none" stroke="#42474d" stroke-width="6" stroke-linejoin="round"/><path d="M52 24 q8 8 0 16 M60 18 q12 14 0 28" stroke="#42474d" stroke-width="5" fill="none" stroke-linecap="round"/></g></svg>
<div style="left:551.26px;top:204.20px;width:34.60px;height:16.10px;background:#0f1214;"></div>
<span class="t" style="left:552.76px;top:206px;font-size:4.6px;line-height:5px;color:#c4c8cc;font-weight:400;transform:scaleX(0.76);transform-origin:0 50%;">#51</span>
<span class="t" style="left:568.46px;top:213px;font-size:5.3px;line-height:6px;color:#c0c4c8;font-weight:400;transform:translateX(-50%) scaleX(0.79);">Sp 051</span>
<svg style="left:576px;top:205px;" width="10" height="9"><g transform="translate(0.860,0.800) scale(0.1000,0.1000) translate(-0.0,-0.0)"><path d="M8 24 H22 L42 8 V56 L22 40 H8 Z" fill="none" stroke="#42474d" stroke-width="6" stroke-linejoin="round"/><path d="M52 24 q8 8 0 16 M60 18 q12 14 0 28" stroke="#42474d" stroke-width="5" fill="none" stroke-linecap="round"/></g></svg>
<div style="left:587.19px;top:204.20px;width:34.60px;height:16.10px;background:#0f1214;"></div>
<span class="t" style="left:588.69px;top:206px;font-size:4.6px;line-height:5px;color:#c4c8cc;font-weight:400;transform:scaleX(0.76);transform-origin:0 50%;">#52</span>
<span class="t" style="left:604.39px;top:213px;font-size:5.3px;line-height:6px;color:#c0c4c8;font-weight:400;transform:translateX(-50%) scaleX(0.79);">Sp 052</span>
<svg style="left:612px;top:205px;" width="10" height="9"><g transform="translate(0.790,0.800) scale(0.1000,0.1000) translate(-0.0,-0.0)"><path d="M8 24 H22 L42 8 V56 L22 40 H8 Z" fill="none" stroke="#42474d" stroke-width="6" stroke-linejoin="round"/><path d="M52 24 q8 8 0 16 M60 18 q12 14 0 28" stroke="#42474d" stroke-width="5" fill="none" stroke-linecap="round"/></g></svg>
<div style="left:623.12px;top:204.20px;width:34.60px;height:16.10px;background:#0f1214;"></div>
<span class="t" style="left:624.62px;top:206px;font-size:4.6px;line-height:5px;color:#c4c8cc;font-weight:400;transform:scaleX(0.76);transform-origin:0 50%;">#53</span>
<span class="t" style="left:640.32px;top:213px;font-size:5.3px;line-height:6px;color:#c0c4c8;font-weight:400;transform:translateX(-50%) scaleX(0.79);">Sp 053</span>
<svg style="left:648px;top:205px;" width="10" height="9"><g transform="translate(0.720,0.800) scale(0.1000,0.1000) translate(-0.0,-0.0)"><path d="M8 24 H22 L42 8 V56 L22 40 H8 Z" fill="none" stroke="#42474d" stroke-width="6" stroke-linejoin="round"/><path d="M52 24 q8 8 0 16 M60 18 q12 14 0 28" stroke="#42474d" stroke-width="5" fill="none" stroke-linecap="round"/></g></svg>
<div style="left:659.05px;top:204.20px;width:34.60px;height:16.10px;background:#0f1214;"></div>
<span class="t" style="left:660.55px;top:206px;font-size:4.6px;line-height:5px;color:#c4c8cc;font-weight:400;transform:scaleX(0.76);transform-origin:0 50%;">#54</span>
<span class="t" style="left:676.25px;top:213px;font-size:5.3px;line-height:6px;color:#c0c4c8;font-weight:400;transform:translateX(-50%) scaleX(0.79);">Sp 054</span>
<svg style="left:684px;top:205px;" width="10" height="9"><g transform="translate(0.650,0.800) scale(0.1000,0.1000) translate(-0.0,-0.0)"><path d="M8 24 H22 L42 8 V56 L22 40 H8 Z" fill="none" stroke="#42474d" stroke-width="6" stroke-linejoin="round"/><path d="M52 24 q8 8 0 16 M60 18 q12 14 0 28" stroke="#42474d" stroke-width="5" fill="none" stroke-linecap="round"/></g></svg>
<div style="left:694.98px;top:204.20px;width:34.60px;height:16.10px;background:#0f1214;"></div>
<span class="t" style="left:696.48px;top:206px;font-size:4.6px;line-height:5px;color:#c4c8cc;font-weight:400;transform:scaleX(0.76);transform-origin:0 50%;">#55</span>
<span class="t" style="left:712.18px;top:213px;font-size:5.3px;line-height:6px;color:#c0c4c8;font-weight:400;transform:translateX(-50%) scaleX(0.79);">Sp 055</span>
<svg style="left:720px;top:205px;" width="10" height="9"><g transform="translate(0.580,0.800) scale(0.1000,0.1000) translate(-0.0,-0.0)"><path d="M8 24 H22 L42 8 V56 L22 40 H8 Z" fill="none" stroke="#42474d" stroke-width="6" stroke-linejoin="round"/><path d="M52 24 q8 8 0 16 M60 18 q12 14 0 28" stroke="#42474d" stroke-width="5" fill="none" stroke-linecap="round"/></g></svg>
<div style="left:730.91px;top:204.20px;width:34.60px;height:16.10px;background:#0f1214;"></div>
<span class="t" style="left:732.41px;top:206px;font-size:4.6px;line-height:5px;color:#c4c8cc;font-weight:400;transform:scaleX(0.76);transform-origin:0 50%;">#56</span>
<span class="t" style="left:748.11px;top:213px;font-size:5.3px;line-height:6px;color:#c0c4c8;font-weight:400;transform:translateX(-50%) scaleX(0.79);">Sp 056</span>
<svg style="left:756px;top:205px;" width="10" height="9"><g transform="translate(0.510,0.800) scale(0.1000,0.1000) translate(-0.0,-0.0)"><path d="M8 24 H22 L42 8 V56 L22 40 H8 Z" fill="none" stroke="#42474d" stroke-width="6" stroke-linejoin="round"/><path d="M52 24 q8 8 0 16 M60 18 q12 14 0 28" stroke="#42474d" stroke-width="5" fill="none" stroke-linecap="round"/></g></svg>
<div style="left:479.40px;top:221.85px;width:34.60px;height:16.10px;background:#0f1214;"></div>
<span class="t" style="left:480.90px;top:224px;font-size:4.6px;line-height:5px;color:#c4c8cc;font-weight:400;transform:scaleX(0.76);transform-origin:0 50%;">#57</span>
<span class="t" style="left:496.60px;top:231px;font-size:5.3px;line-height:6px;color:#c0c4c8;font-weight:400;transform:translateX(-50%) scaleX(0.79);">Sp 057</span>
<svg style="left:505px;top:223px;" width="9" height="8"><g transform="translate(0.000,0.450) scale(0.1000,0.1000) translate(-0.0,-0.0)"><path d="M8 24 H22 L42 8 V56 L22 40 H8 Z" fill="none" stroke="#42474d" stroke-width="6" stroke-linejoin="round"/><path d="M52 24 q8 8 0 16 M60 18 q12 14 0 28" stroke="#42474d" stroke-width="5" fill="none" stroke-linecap="round"/></g></svg>
<div style="left:515.33px;top:221.85px;width:34.60px;height:16.10px;background:#0f1214;"></div>
<span class="t" style="left:516.83px;top:224px;font-size:4.6px;line-height:5px;color:#c4c8cc;font-weight:400;transform:scaleX(0.76);transform-origin:0 50%;">#58</span>
<span class="t" style="left:532.53px;top:231px;font-size:5.3px;line-height:6px;color:#c0c4c8;font-weight:400;transform:translateX(-50%) scaleX(0.79);">Sp 058</span>
<svg style="left:540px;top:223px;" width="10" height="8"><g transform="translate(0.930,0.450) scale(0.1000,0.1000) translate(-0.0,-0.0)"><path d="M8 24 H22 L42 8 V56 L22 40 H8 Z" fill="none" stroke="#42474d" stroke-width="6" stroke-linejoin="round"/><path d="M52 24 q8 8 0 16 M60 18 q12 14 0 28" stroke="#42474d" stroke-width="5" fill="none" stroke-linecap="round"/></g></svg>
<div style="left:551.26px;top:221.85px;width:34.60px;height:16.10px;background:#0f1214;"></div>
<span class="t" style="left:552.76px;top:224px;font-size:4.6px;line-height:5px;color:#c4c8cc;font-weight:400;transform:scaleX(0.76);transform-origin:0 50%;">#59</span>
<span class="t" style="left:568.46px;top:231px;font-size:5.3px;line-height:6px;color:#c0c4c8;font-weight:400;transform:translateX(-50%) scaleX(0.79);">Sp 059</span>
<svg style="left:576px;top:223px;" width="10" height="8"><g transform="translate(0.860,0.450) scale(0.1000,0.1000) translate(-0.0,-0.0)"><path d="M8 24 H22 L42 8 V56 L22 40 H8 Z" fill="none" stroke="#42474d" stroke-width="6" stroke-linejoin="round"/><path d="M52 24 q8 8 0 16 M60 18 q12 14 0 28" stroke="#42474d" stroke-width="5" fill="none" stroke-linecap="round"/></g></svg>
<div style="left:587.19px;top:221.85px;width:34.60px;height:16.10px;background:#0f1214;"></div>
<span class="t" style="left:588.69px;top:224px;font-size:4.6px;line-height:5px;color:#c4c8cc;font-weight:400;transform:scaleX(0.76);transform-origin:0 50%;">#60</span>
<span class="t" style="left:604.39px;top:231px;font-size:5.3px;line-height:6px;color:#c0c4c8;font-weight:400;transform:translateX(-50%) scaleX(0.79);">Sp 060</span>
<svg style="left:612px;top:223px;" width="10" height="8"><g transform="translate(0.790,0.450) scale(0.1000,0.1000) translate(-0.0,-0.0)"><path d="M8 24 H22 L42 8 V56 L22 40 H8 Z" fill="none" stroke="#42474d" stroke-width="6" stroke-linejoin="round"/><path d="M52 24 q8 8 0 16 M60 18 q12 14 0 28" stroke="#42474d" stroke-width="5" fill="none" stroke-linecap="round"/></g></svg>
<div style="left:623.12px;top:221.85px;width:34.60px;height:16.10px;background:#0f1214;"></div>
<span class="t" style="left:624.62px;top:224px;font-size:4.6px;line-height:5px;color:#c4c8cc;font-weight:400;transform:scaleX(0.76);transform-origin:0 50%;">#61</span>
<span class="t" style="left:640.32px;top:231px;font-size:5.3px;line-height:6px;color:#c0c4c8;font-weight:400;transform:translateX(-50%) scaleX(0.79);">Sp 061</span>
<svg style="left:648px;top:223px;" width="10" height="8"><g transform="translate(0.720,0.450) scale(0.1000,0.1000) translate(-0.0,-0.0)"><path d="M8 24 H22 L42 8 V56 L22 40 H8 Z" fill="none" stroke="#42474d" stroke-width="6" stroke-linejoin="round"/><path d="M52 24 q8 8 0 16 M60 18 q12 14 0 28" stroke="#42474d" stroke-width="5" fill="none" stroke-linecap="round"/></g></svg>
<div style="left:659.05px;top:221.85px;width:34.60px;height:16.10px;background:#0f1214;"></div>
<span class="t" style="left:660.55px;top:224px;font-size:4.6px;line-height:5px;color:#c4c8cc;font-weight:400;transform:scaleX(0.76);transform-origin:0 50%;">#62</span>
<span class="t" style="left:676.25px;top:231px;font-size:5.3px;line-height:6px;color:#c0c4c8;font-weight:400;transform:translateX(-50%) scaleX(0.79);">Sp 062</span>
<svg style="left:684px;top:223px;" width="10" height="8"><g transform="translate(0.650,0.450) scale(0.1000,0.1000) translate(-0.0,-0.0)"><path d="M8 24 H22 L42 8 V56 L22 40 H8 Z" fill="none" stroke="#42474d" stroke-width="6" stroke-linejoin="round"/><path d="M52 24 q8 8 0 16 M60 18 q12 14 0 28" stroke="#42474d" stroke-width="5" fill="none" stroke-linecap="round"/></g></svg>
<div style="left:694.98px;top:221.85px;width:34.60px;height:16.10px;background:#0f1214;"></div>
<span class="t" style="left:696.48px;top:224px;font-size:4.6px;line-height:5px;color:#c4c8cc;font-weight:400;transform:scaleX(0.76);transform-origin:0 50%;">#63</span>
<span class="t" style="left:712.18px;top:231px;font-size:5.3px;line-height:6px;color:#c0c4c8;font-weight:400;transform:translateX(-50%) scaleX(0.79);">Sp 063</span>
<svg style="left:720px;top:223px;" width="10" height="8"><g transform="translate(0.580,0.450) scale(0.1000,0.1000) translate(-0.0,-0.0)"><path d="M8 24 H22 L42 8 V56 L22 40 H8 Z" fill="none" stroke="#42474d" stroke-width="6" stroke-linejoin="round"/><path d="M52 24 q8 8 0 16 M60 18 q12 14 0 28" stroke="#42474d" stroke-width="5" fill="none" stroke-linecap="round"/></g></svg>
<div style="left:730.91px;top:221.85px;width:34.60px;height:16.10px;background:#0f1214;"></div>
<span class="t" style="left:732.41px;top:224px;font-size:4.6px;line-height:5px;color:#c4c8cc;font-weight:400;transform:scaleX(0.76);transform-origin:0 50%;">#64</span>
<span class="t" style="left:748.11px;top:231px;font-size:5.3px;line-height:6px;color:#c0c4c8;font-weight:400;transform:translateX(-50%) scaleX(0.79);">Sp 064</span>
<svg style="left:756px;top:223px;" width="10" height="8"><g transform="translate(0.510,0.450) scale(0.1000,0.1000) translate(-0.0,-0.0)"><path d="M8 24 H22 L42 8 V56 L22 40 H8 Z" fill="none" stroke="#42474d" stroke-width="6" stroke-linejoin="round"/><path d="M52 24 q8 8 0 16 M60 18 q12 14 0 28" stroke="#42474d" stroke-width="5" fill="none" stroke-linecap="round"/></g></svg>
<div style="left:478.60px;top:287.40px;width:287.00px;height:155.10px;background:#111416;"></div>
<div style="left:479.00px;top:287.70px;width:35.30px;height:13.00px;background:#2b2f34;"></div>
<span class="t" style="left:496.60px;top:291px;font-size:5.2px;line-height:6px;color:#fff;font-weight:700;transform:translateX(-50%) scaleX(0.76);">Rendering Area</span>
<div style="left:499.50px;top:324.00px;width:35.20px;height:10.20px;background:#15181b;"></div>
<span class="t" style="left:517.10px;top:326px;font-size:5.0px;line-height:6px;color:#8f959b;font-weight:400;transform:translateX(-50%) scaleX(0.8);">FL</span>
<div style="left:499.50px;top:336.10px;width:35.20px;height:10.90px;background:#030405;box-shadow:0 0 0 0.5px #1f2326;"></div>
<div style="left:499.50px;top:347.60px;width:17.60px;height:1.10px;background:#732a70;"></div>
<div style="left:517.10px;top:347.60px;width:17.60px;height:1.10px;background:#2b732d;"></div>
<span class="t" style="left:508.48px;top:338px;font-size:5.3px;line-height:6px;color:#f4f5f6;font-weight:400;transform:translateX(-50%) scaleX(0.88);">-6.00</span>
<span class="t" style="left:526.43px;top:338px;font-size:5.3px;line-height:6px;color:#f4f5f6;font-weight:400;transform:translateX(-50%) scaleX(0.88);">6.00</span>
<div style="left:540.30px;top:324.00px;width:35.20px;height:10.20px;background:#15181b;"></div>
<span class="t" style="left:557.90px;top:326px;font-size:5.0px;line-height:6px;color:#8f959b;font-weight:400;transform:translateX(-50%) scaleX(0.8);">FCL</span>
<div style="left:540.30px;top:336.10px;width:35.20px;height:10.90px;background:#030405;box-shadow:0 0 0 0.5px #1f2326;"></div>
<div style="left:540.30px;top:347.60px;width:17.60px;height:1.10px;background:#732a70;"></div>
<div style="left:557.90px;top:347.60px;width:17.60px;height:1.10px;background:#2b732d;"></div>
<span class="t" style="left:549.28px;top:338px;font-size:5.3px;line-height:6px;color:#f4f5f6;font-weight:400;transform:translateX(-50%) scaleX(0.88);">-3.00</span>
<span class="t" style="left:567.23px;top:338px;font-size:5.3px;line-height:6px;color:#f4f5f6;font-weight:400;transform:translateX(-50%) scaleX(0.88);">7.00</span>
<div style="left:584.70px;top:324.00px;width:35.20px;height:10.20px;background:#15181b;"></div>
<span class="t" style="left:602.30px;top:326px;font-size:5.0px;line-height:6px;color:#8f959b;font-weight:400;transform:translateX(-50%) scaleX(0.8);">FC</span>
<div style="left:584.70px;top:336.10px;width:35.20px;height:10.90px;background:#030405;box-shadow:0 0 0 0.5px #1f2326;"></div>
<div style="left:584.70px;top:347.60px;width:17.60px;height:1.10px;background:#732a70;"></div>
<div style="left:602.30px;top:347.60px;width:17.60px;height:1.10px;background:#2b732d;"></div>
<span class="t" style="left:593.68px;top:338px;font-size:5.3px;line-height:6px;color:#f4f5f6;font-weight:400;transform:translateX(-50%) scaleX(0.88);">0.00</span>
<span class="t" style="left:611.63px;top:338px;font-size:5.3px;line-height:6px;color:#f4f5f6;font-weight:400;transform:translateX(-50%) scaleX(0.88);">7.00</span>
<div style="left:629.40px;top:324.00px;width:35.20px;height:10.20px;background:#15181b;"></div>
<span class="t" style="left:647.00px;top:326px;font-size:5.0px;line-height:6px;color:#8f959b;font-weight:400;transform:translateX(-50%) scaleX(0.8);">FCR</span>
<div style="left:629.40px;top:336.10px;width:35.20px;height:10.90px;background:#030405;box-shadow:0 0 0 0.5px #1f2326;"></div>
<div style="left:629.40px;top:347.60px;width:17.60px;height:1.10px;background:#732a70;"></div>
<div style="left:647.00px;top:347.60px;width:17.60px;height:1.10px;background:#2b732d;"></div>
<span class="t" style="left:638.38px;top:338px;font-size:5.3px;line-height:6px;color:#f4f5f6;font-weight:400;transform:translateX(-50%) scaleX(0.88);">3.00</span>
<span class="t" style="left:656.33px;top:338px;font-size:5.3px;line-height:6px;color:#f4f5f6;font-weight:400;transform:translateX(-50%) scaleX(0.88);">7.00</span>
<div style="left:671.10px;top:324.00px;width:35.20px;height:10.20px;background:#15181b;"></div>
<span class="t" style="left:688.70px;top:326px;font-size:5.0px;line-height:6px;color:#8f959b;font-weight:400;transform:translateX(-50%) scaleX(0.8);">FR</span>
<div style="left:671.10px;top:336.10px;width:35.20px;height:10.90px;background:#030405;box-shadow:0 0 0 0.5px #1f2326;"></div>
<div style="left:671.10px;top:347.60px;width:17.60px;height:1.10px;background:#732a70;"></div>
<div style="left:688.70px;top:347.60px;width:17.60px;height:1.10px;background:#2b732d;"></div>
<span class="t" style="left:680.08px;top:338px;font-size:5.3px;line-height:6px;color:#f4f5f6;font-weight:400;transform:translateX(-50%) scaleX(0.88);">6.00</span>
<span class="t" style="left:698.03px;top:338px;font-size:5.3px;line-height:6px;color:#f4f5f6;font-weight:400;transform:translateX(-50%) scaleX(0.88);">6.00</span>
<div style="left:499.50px;top:408.20px;width:35.20px;height:9.30px;background:#15181b;"></div>
<span class="t" style="left:517.10px;top:410px;font-size:5.0px;line-height:6px;color:#8f959b;font-weight:400;transform:translateX(-50%) scaleX(0.8);">BL</span>
<div style="left:499.50px;top:394.50px;width:35.20px;height:10.90px;background:#030405;box-shadow:0 0 0 0.5px #1f2326;"></div>
<div style="left:499.50px;top:406.00px;width:17.60px;height:1.10px;background:#732a70;"></div>
<div style="left:517.10px;top:406.00px;width:17.60px;height:1.10px;background:#2b732d;"></div>
<span class="t" style="left:508.48px;top:397px;font-size:5.3px;line-height:6px;color:#f4f5f6;font-weight:400;transform:translateX(-50%) scaleX(0.88);">-5.00</span>
<span class="t" style="left:526.43px;top:397px;font-size:5.3px;line-height:6px;color:#f4f5f6;font-weight:400;transform:translateX(-50%) scaleX(0.88);">-7.00</span>
<div style="left:540.30px;top:408.20px;width:35.20px;height:9.30px;background:#15181b;"></div>
<span class="t" style="left:557.90px;top:410px;font-size:5.0px;line-height:6px;color:#8f959b;font-weight:400;transform:translateX(-50%) scaleX(0.8);">BLC</span>
<div style="left:540.30px;top:394.50px;width:35.20px;height:10.90px;background:#030405;box-shadow:0 0 0 0.5px #1f2326;"></div>
<div style="left:540.30px;top:406.00px;width:17.60px;height:1.10px;background:#732a70;"></div>
<div style="left:557.90px;top:406.00px;width:17.60px;height:1.10px;background:#2b732d;"></div>
<span class="t" style="left:549.28px;top:397px;font-size:5.3px;line-height:6px;color:#f4f5f6;font-weight:400;transform:translateX(-50%) scaleX(0.88);">-3.00</span>
<span class="t" style="left:567.23px;top:397px;font-size:5.3px;line-height:6px;color:#f4f5f6;font-weight:400;transform:translateX(-50%) scaleX(0.88);">-8.00</span>
<div style="left:584.70px;top:408.20px;width:35.20px;height:9.30px;background:#15181b;"></div>
<span class="t" style="left:602.30px;top:410px;font-size:5.0px;line-height:6px;color:#8f959b;font-weight:400;transform:translateX(-50%) scaleX(0.8);">BC</span>
<div style="left:584.70px;top:394.50px;width:35.20px;height:10.90px;background:#030405;box-shadow:0 0 0 0.5px #1f2326;"></div>
<div style="left:584.70px;top:406.00px;width:17.60px;height:1.10px;background:#732a70;"></div>
<div style="left:602.30px;top:406.00px;width:17.60px;height:1.10px;background:#2b732d;"></div>
<span class="t" style="left:593.68px;top:397px;font-size:5.3px;line-height:6px;color:#f4f5f6;font-weight:400;transform:translateX(-50%) scaleX(0.88);">0.00</span>
<span class="t" style="left:611.63px;top:397px;font-size:5.3px;line-height:6px;color:#f4f5f6;font-weight:400;transform:translateX(-50%) scaleX(0.88);">-8.00</span>
<div style="left:629.40px;top:408.20px;width:35.20px;height:9.30px;background:#15181b;"></div>
<span class="t" style="left:647.00px;top:410px;font-size:5.0px;line-height:6px;color:#8f959b;font-weight:400;transform:translateX(-50%) scaleX(0.8);">BRC</span>
<div style="left:629.40px;top:394.50px;width:35.20px;height:10.90px;background:#030405;box-shadow:0 0 0 0.5px #1f2326;"></div>
<div style="left:629.40px;top:406.00px;width:17.60px;height:1.10px;background:#732a70;"></div>
<div style="left:647.00px;top:406.00px;width:17.60px;height:1.10px;background:#2b732d;"></div>
<span class="t" style="left:638.38px;top:397px;font-size:5.3px;line-height:6px;color:#f4f5f6;font-weight:400;transform:translateX(-50%) scaleX(0.88);">3.00</span>
<span class="t" style="left:656.33px;top:397px;font-size:5.3px;line-height:6px;color:#f4f5f6;font-weight:400;transform:translateX(-50%) scaleX(0.88);">-8.00</span>
<div style="left:671.10px;top:408.20px;width:35.20px;height:9.30px;background:#15181b;"></div>
<span class="t" style="left:688.70px;top:410px;font-size:5.0px;line-height:6px;color:#8f959b;font-weight:400;transform:translateX(-50%) scaleX(0.8);">BR</span>
<div style="left:671.10px;top:394.50px;width:35.20px;height:10.90px;background:#030405;box-shadow:0 0 0 0.5px #1f2326;"></div>
<div style="left:671.10px;top:406.00px;width:17.60px;height:1.10px;background:#732a70;"></div>
<div style="left:688.70px;top:406.00px;width:17.60px;height:1.10px;background:#2b732d;"></div>
<span class="t" style="left:680.08px;top:397px;font-size:5.3px;line-height:6px;color:#f4f5f6;font-weight:400;transform:translateX(-50%) scaleX(0.88);">5.00</span>
<span class="t" style="left:698.03px;top:397px;font-size:5.3px;line-height:6px;color:#f4f5f6;font-weight:400;transform:translateX(-50%) scaleX(0.88);">-7.00</span>
<div style="left:483.90px;top:351.20px;width:14.00px;height:10.40px;background:#15181b;"></div>
<span class="t" style="left:490.90px;top:353px;font-size:5.0px;line-height:6px;color:#8f959b;font-weight:400;transform:translateX(-50%) scaleX(0.8);">SLF</span>
<div style="left:499.50px;top:350.70px;width:35.20px;height:10.90px;background:#030405;box-shadow:0 0 0 0.5px #1f2326;"></div>
<div style="left:499.50px;top:362.20px;width:17.60px;height:1.10px;background:#732a70;"></div>
<div style="left:517.10px;top:362.20px;width:17.60px;height:1.10px;background:#2b732d;"></div>
<span class="t" style="left:508.48px;top:353px;font-size:5.3px;line-height:6px;color:#f4f5f6;font-weight:400;transform:translateX(-50%) scaleX(0.88);">-7.00</span>
<span class="t" style="left:526.43px;top:353px;font-size:5.3px;line-height:6px;color:#f4f5f6;font-weight:400;transform:translateX(-50%) scaleX(0.88);">4.00</span>
<div style="left:483.90px;top:365.80px;width:14.00px;height:10.40px;background:#15181b;"></div>
<span class="t" style="left:490.90px;top:368px;font-size:5.0px;line-height:6px;color:#8f959b;font-weight:400;transform:translateX(-50%) scaleX(0.8);">SL</span>
<div style="left:499.50px;top:365.30px;width:35.20px;height:10.90px;background:#030405;box-shadow:0 0 0 0.5px #1f2326;"></div>
<div style="left:499.50px;top:376.80px;width:17.60px;height:1.10px;background:#732a70;"></div>
<div style="left:517.10px;top:376.80px;width:17.60px;height:1.10px;background:#2b732d;"></div>
<span class="t" style="left:508.48px;top:368px;font-size:5.3px;line-height:6px;color:#f4f5f6;font-weight:400;transform:translateX(-50%) scaleX(0.88);">-8.00</span>
<span class="t" style="left:526.43px;top:368px;font-size:5.3px;line-height:6px;color:#f4f5f6;font-weight:400;transform:translateX(-50%) scaleX(0.88);">0.00</span>
<div style="left:483.90px;top:380.40px;width:14.00px;height:10.40px;background:#15181b;"></div>
<span class="t" style="left:490.90px;top:383px;font-size:5.0px;line-height:6px;color:#8f959b;font-weight:400;transform:translateX(-50%) scaleX(0.8);">SLB</span>
<div style="left:499.50px;top:379.90px;width:35.20px;height:10.90px;background:#030405;box-shadow:0 0 0 0.5px #1f2326;"></div>
<div style="left:499.50px;top:391.40px;width:17.60px;height:1.10px;background:#732a70;"></div>
<div style="left:517.10px;top:391.40px;width:17.60px;height:1.10px;background:#2b732d;"></div>
<span class="t" style="left:508.48px;top:382px;font-size:5.3px;line-height:6px;color:#f4f5f6;font-weight:400;transform:translateX(-50%) scaleX(0.88);">-7.00</span>
<span class="t" style="left:526.43px;top:382px;font-size:5.3px;line-height:6px;color:#f4f5f6;font-weight:400;transform:translateX(-50%) scaleX(0.88);">-4.00</span>
<div style="left:707.60px;top:351.20px;width:15.20px;height:10.40px;background:#15181b;"></div>
<span class="t" style="left:715.20px;top:353px;font-size:5.0px;line-height:6px;color:#8f959b;font-weight:400;transform:translateX(-50%) scaleX(0.8);">SRF</span>
<div style="left:671.10px;top:350.70px;width:35.20px;height:10.90px;background:#030405;box-shadow:0 0 0 0.5px #1f2326;"></div>
<div style="left:671.10px;top:362.20px;width:17.60px;height:1.10px;background:#732a70;"></div>
<div style="left:688.70px;top:362.20px;width:17.60px;height:1.10px;background:#2b732d;"></div>
<span class="t" style="left:680.08px;top:353px;font-size:5.3px;line-height:6px;color:#f4f5f6;font-weight:400;transform:translateX(-50%) scaleX(0.88);">7.00</span>
<span class="t" style="left:698.03px;top:353px;font-size:5.3px;line-height:6px;color:#f4f5f6;font-weight:400;transform:translateX(-50%) scaleX(0.88);">4.00</span>
<div style="left:707.60px;top:365.80px;width:15.20px;height:10.40px;background:#15181b;"></div>
<span class="t" style="left:715.20px;top:368px;font-size:5.0px;line-height:6px;color:#8f959b;font-weight:400;transform:translateX(-50%) scaleX(0.8);">SR</span>
<div style="left:671.10px;top:365.30px;width:35.20px;height:10.90px;background:#030405;box-shadow:0 0 0 0.5px #1f2326;"></div>
<div style="left:671.10px;top:376.80px;width:17.60px;height:1.10px;background:#732a70;"></div>
<div style="left:688.70px;top:376.80px;width:17.60px;height:1.10px;background:#2b732d;"></div>
<span class="t" style="left:680.08px;top:368px;font-size:5.3px;line-height:6px;color:#f4f5f6;font-weight:400;transform:translateX(-50%) scaleX(0.88);">8.00</span>
<span class="t" style="left:698.03px;top:368px;font-size:5.3px;line-height:6px;color:#f4f5f6;font-weight:400;transform:translateX(-50%) scaleX(0.88);">0.00</span>
<div style="left:707.60px;top:380.40px;width:15.20px;height:10.40px;background:#15181b;"></div>
<span class="t" style="left:715.20px;top:383px;font-size:5.0px;line-height:6px;color:#8f959b;font-weight:400;transform:translateX(-50%) scaleX(0.8);">SRB</span>
<div style="left:671.10px;top:379.90px;width:35.20px;height:10.90px;background:#030405;box-shadow:0 0 0 0.5px #1f2326;"></div>
<div style="left:671.10px;top:391.40px;width:17.60px;height:1.10px;background:#732a70;"></div>
<div style="left:688.70px;top:391.40px;width:17.60px;height:1.10px;background:#2b732d;"></div>
<span class="t" style="left:680.08px;top:382px;font-size:5.3px;line-height:6px;color:#f4f5f6;font-weight:400;transform:translateX(-50%) scaleX(0.88);">7.00</span>
<span class="t" style="left:698.03px;top:382px;font-size:5.3px;line-height:6px;color:#f4f5f6;font-weight:400;transform:translateX(-50%) scaleX(0.88);">-4.00</span>
<span class="t" style="left:602.60px;top:355px;font-size:5.0px;line-height:6px;color:#aeb3b8;font-weight:400;transform:translateX(-50%) scaleX(0.8);">Center</span>
<div style="left:584.70px;top:365.80px;width:35.20px;height:10.90px;background:#030405;box-shadow:0 0 0 0.5px #1f2326;"></div>
<div style="left:584.70px;top:377.30px;width:17.60px;height:1.10px;background:#732a70;"></div>
<div style="left:602.30px;top:377.30px;width:17.60px;height:1.10px;background:#2b732d;"></div>
<span class="t" style="left:593.68px;top:368px;font-size:5.3px;line-height:6px;color:#f4f5f6;font-weight:400;transform:translateX(-50%) scaleX(0.88);">0.00</span>
<span class="t" style="left:611.63px;top:368px;font-size:5.3px;line-height:6px;color:#f4f5f6;font-weight:400;transform:translateX(-50%) scaleX(0.88);">-1.40</span>
<div style="left:726.10px;top:352.30px;width:33.20px;height:9.30px;background:#15181b;"></div>
<span class="t" style="left:748.40px;top:354px;font-size:5.0px;line-height:6px;color:#8f959b;font-weight:400;transform:translateX(-50%) scaleX(0.8);">Height</span>
<div style="left:726.10px;top:365.80px;width:13.60px;height:10.40px;background:#15181b;"></div>
<span class="t" style="left:732.90px;top:368px;font-size:5.0px;line-height:6px;color:#8f959b;font-weight:400;transform:translateX(-50%) scaleX(0.8);">High</span>
<div style="left:741.50px;top:365.30px;width:17.80px;height:10.90px;background:#030405;box-shadow:0 0 0 0.5px #1f2640;"></div>
<div style="left:741.50px;top:376.80px;width:17.80px;height:1.10px;background:#2f4088;"></div>
<span class="t" style="left:750.30px;top:368px;font-size:5.3px;line-height:6px;color:#f4f5f6;font-weight:400;transform:translateX(-50%) scaleX(0.88);">0.00</span>
<div style="left:726.10px;top:380.40px;width:13.60px;height:10.40px;background:#15181b;"></div>
<span class="t" style="left:732.90px;top:383px;font-size:5.0px;line-height:6px;color:#8f959b;font-weight:400;transform:translateX(-50%) scaleX(0.8);">Mid</span>
<div style="left:741.50px;top:379.90px;width:17.80px;height:10.90px;background:#030405;box-shadow:0 0 0 0.5px #1f2640;"></div>
<div style="left:741.50px;top:391.40px;width:17.80px;height:1.10px;background:#2f4088;"></div>
<span class="t" style="left:750.30px;top:382px;font-size:5.3px;line-height:6px;color:#f4f5f6;font-weight:400;transform:translateX(-50%) scaleX(0.88);">0.00</span>
<div style="left:726.10px;top:395.00px;width:13.60px;height:10.40px;background:#15181b;"></div>
<span class="t" style="left:732.90px;top:397px;font-size:5.0px;line-height:6px;color:#8f959b;font-weight:400;transform:translateX(-50%) scaleX(0.8);">Low</span>
<div style="left:741.50px;top:394.50px;width:17.80px;height:10.90px;background:#030405;box-shadow:0 0 0 0.5px #1f2640;"></div>
<div style="left:741.50px;top:406.00px;width:17.80px;height:1.10px;background:#2f4088;"></div>
<span class="t" style="left:750.30px;top:397px;font-size:5.3px;line-height:6px;color:#f4f5f6;font-weight:400;transform:translateX(-50%) scaleX(0.88);">0.00</span>
<div style="left:750.70px;top:11.70px;width:19.30px;height:15.60px;background:#030102;"></div>
<svg style="left:8px;top:16px;" width="9" height="9"><g transform="translate(0.000,0.200) scale(0.1000,0.1000) translate(-0.0,-0.0)"><path d="M38 2 L72 17 L38 32 L4 17 Z" fill="#e6e8ea"/><path d="M2 22 L35 37 L35 72 L2 56 Z" fill="#cfd2d5"/><path d="M74 22 L41 37 L41 72 L74 56 Z" fill="#b9bdc1"/></g></svg>
<svg style="left:46px;top:17px;" width="10" height="8"><g transform="translate(0.000,0.300) scale(0.1000,0.1000) translate(-0.0,-0.0)"><rect x="2" y="2" width="79" height="58" rx="12" fill="#e6e8ea"/><circle cx="25" cy="24" r="9" fill="#1c1f22"/><circle cx="58" cy="24" r="9" fill="#1c1f22"/><path d="M14 52 L30 36 L44 50 L56 40 L70 52 Z" fill="#1c1f22"/></g></svg>
<svg style="left:84px;top:17px;" width="11" height="8"><g transform="translate(0.300,0.000) scale(0.1000,0.1000) translate(-0.0,-0.0)"><defs><linearGradient id="rv" x1="0" y1="0" x2="0" y2="1"><stop offset="0" stop-color="#8d9196"/><stop offset="1" stop-color="#eceef0"/></linearGradient></defs><path d="M2 2 L94 64 L2 64 Z" fill="url(#rv)"/></g></svg>
<div style="left:124.00px;top:18.00px;width:7.40px;height:4.80px;background:#cdd0d3;border-radius:0.4px;"></div>
<span class="t" style="left:127.70px;top:18px;font-size:4.2px;line-height:5px;color:#2a2e32;font-weight:700;transform:translateX(-50%) scaleX(0.8);">3D</span>
<svg style="left:162px;top:15px;" width="13" height="12"><g transform="translate(0.500,0.200) scale(0.1000,0.1000) translate(-0.0,-0.0)"><circle cx="40" cy="38" r="18" fill="none" stroke="#f07f78" stroke-width="13"/><circle cx="40" cy="38" r="25.15" fill="none" stroke="#f07f78" stroke-width="9.1" stroke-dasharray="9.876"/><circle cx="78" cy="73" r="12" fill="none" stroke="#f07f78" stroke-width="10"/><circle cx="78" cy="73" r="17.5" fill="none" stroke="#f07f78" stroke-width="7.0" stroke-dasharray="6.872"/></g></svg>
<svg style="left:202px;top:16px;" width="10" height="10"><g transform="translate(0.700,0.500) scale(0.1000,0.1000) translate(-0.0,-0.0)"><circle cx="39" cy="39" r="37" fill="#e6e8ea"/><circle cx="39" cy="39" r="7" fill="#1c1f22"/><path d="M39 39 L39 8 M39 39 L12 55 M39 39 L66 55" stroke="#1c1f22" stroke-width="6"/></g></svg>
<svg style="left:244px;top:16px;" width="10" height="10"><g transform="translate(0.300,0.200) scale(0.1000,0.1000) translate(-0.0,-0.0)"><circle cx="42" cy="42" r="37" fill="none" stroke="#e6e8ea" stroke-width="7"/></g></svg>
<span class="t" style="left:248.50px;top:17px;font-size:6.2px;line-height:7px;color:#e6e8ea;font-weight:700;transform:translateX(-50%) scaleX(0.9);">?</span>
<svg style="left:756px;top:17px;" width="10" height="8"><g transform="translate(0.100,0.800) scale(0.0909,0.0900) translate(-0.0,-0.0)"><path d="M10 10 L78 50 M78 10 L10 50" stroke="#b8404a" stroke-width="7" fill="none"/><g fill="#e6a8b2"><rect x="0" y="0" width="22" height="20"/><rect x="66" y="0" width="22" height="20"/><rect x="0" y="40" width="22" height="20"/><rect x="66" y="40" width="22" height="20"/></g></g></svg>
<svg style="left:4px;top:35px;" width="7" height="10"><g transform="translate(0.500,0.800) scale(0.1000,0.1000) translate(-0.0,-0.0)"><rect x="1" y="1" width="51" height="72" rx="5" fill="#e6e8ea"/><circle cx="26.5" cy="48" r="14" fill="#1a1d20"/><circle cx="26.5" cy="48" r="5.5" fill="#e6e8ea"/><circle cx="26.5" cy="17" r="7" fill="#1a1d20"/></g></svg>
<svg style="left:4px;top:53px;" width="7" height="8"><g transform="translate(0.200,0.000) scale(0.1000,0.1000) translate(-0.0,-0.0)"><rect x="2" y="6" width="54" height="52" rx="12" fill="#ef6a4c"/><path d="M6 22 q23 12 46 0 M6 38 q23 12 46 0" stroke="#0a0606" stroke-width="6" fill="none"/></g></svg>
<svg style="left:2px;top:68px;" width="12" height="12"><g transform="translate(0.200,0.600) scale(0.1000,0.1000) translate(-0.0,-0.0)"><circle cx="31" cy="33" r="16" fill="none" stroke="#e6e8ea" stroke-width="13"/><circle cx="31" cy="33" r="23.15" fill="none" stroke="#e6e8ea" stroke-width="9.1" stroke-dasharray="9.091"/><circle cx="72" cy="68" r="11" fill="none" stroke="#e6e8ea" stroke-width="10"/><circle cx="72" cy="68" r="16.5" fill="none" stroke="#e6e8ea" stroke-width="7.0" stroke-dasharray="6.480"/></g></svg>
<svg style="left:5px;top:192px;" width="10" height="9"><g transform="translate(0.800,0.800) scale(0.1000,0.1000) translate(-0.0,-0.0)"><rect x="0" y="0" width="82" height="70" rx="6" fill="#e6e8ea"/><path d="M10 60 L10 48 L28 22 L42 40 L54 28 L72 48 L72 60 Z" fill="#181b1e"/></g></svg>
<svg style="left:5px;top:222px;" width="10" height="10"><g transform="translate(0.600,0.600) scale(0.1000,0.1000) translate(-0.0,-0.0)"><rect x="4" y="2" width="26" height="40" rx="4" fill="#e6e8ea"/><rect x="40" y="2" width="26" height="40" rx="4" fill="#e6e8ea"/><circle cx="17" cy="28" r="7" fill="#181b1e"/><circle cx="53" cy="28" r="7" fill="#181b1e"/><path d="M4 52 h18 l14 -8 v34 l-14 -8 h-18 z" fill="#e6e8ea"/><path d="M46 52 q10 9 0 18 M56 46 q16 15 0 30" stroke="#e6e8ea" stroke-width="6" fill="none"/></g></svg>
<svg style="left:4px;top:162px;" width="11" height="11"><g transform="translate(0.600,0.600) scale(0.1000,0.1000) translate(-0.0,-0.0)"><path d="M45 6 L84 45 L45 84 L6 45 Z" fill="none" stroke="#33383d" stroke-width="10"/><path d="M45 28 L62 45 L45 62 L28 45 Z" fill="#33383d"/></g></svg>
<svg style="left:439px;top:39px;" width="9" height="9"><g transform="translate(0.500,0.300) scale(0.0971,0.0947) translate(-0.0,-0.0)"><path d="M10 66 V34 a25 25 0 0 1 50 0 V66 H44 V34 a9 9 0 0 0 -18 0 V66 Z" fill="none" stroke="#f08f88" stroke-width="9" stroke-linejoin="round"/><rect x="4" y="58" width="20" height="10" fill="#fbe6e4"/><rect x="46" y="58" width="20" height="10" fill="#fbe6e4"/></g></svg>
<svg style="left:459px;top:406px;" width="11" height="12"><g transform="translate(0.300,0.600) scale(0.1000,0.1000) translate(-0.0,-0.0)"><circle cx="36" cy="36" r="25" fill="none" stroke="#e6e8ea" stroke-width="8"/><path d="M55 55 L82 82" stroke="#e6e8ea" stroke-width="13" stroke-linecap="round"/><path d="M24 36 H48" stroke="#e6e8ea" stroke-width="7"/><path d="M36 24 V48" stroke="#e6e8ea" stroke-width="7"/></g></svg>
<svg style="left:459px;top:423px;" width="11" height="12"><g transform="translate(0.300,0.600) scale(0.1000,0.1000) translate(-0.0,-0.0)"><circle cx="36" cy="36" r="25" fill="none" stroke="#e6e8ea" stroke-width="8"/><path d="M55 55 L82 82" stroke="#e6e8ea" stroke-width="13" stroke-linecap="round"/><path d="M24 36 H48" stroke="#e6e8ea" stroke-width="7"/></g></svg>
<svg style="left:40px;top:395px;" width="61" height="51"><g transform="translate(0.000,0.000) scale(1.0000,1.0000) translate(-0.0,-0.0)"><g stroke-width="1.1" stroke-linecap="round"><path d="M24.299999999999997 29.19999999999999 L24.299999999999997 15.699999999999989" stroke="#3fae3a"/><path d="M24.299999999999997 29.19999999999999 L38.8 29.19999999999999" stroke="#c044c0"/><path d="M24.299999999999997 29.19999999999999 L16.299999999999997 35.69999999999999" stroke="#3a56d8"/></g><path d="M38.3 27.899999999999988 l2.6 1.3 l-2.6 1.3z" fill="#c044c0"/><path d="M22.999999999999996 16.19999999999999 l1.3 -2.4 l1.3 2.4z" fill="#3fae3a"/></g></svg>
<span class="t" style="left:64.20px;top:404px;font-size:4.8px;line-height:5px;color:#fff;font-weight:700;transform:translateX(-50%) scaleX(0.85);">Y</span>
<span class="t" style="left:81.40px;top:422px;font-size:4.8px;line-height:5px;color:#fff;font-weight:700;transform:translateX(-50%) scaleX(0.85);">X</span>
<span class="t" style="left:53.40px;top:430px;font-size:4.8px;line-height:5px;color:#fff;font-weight:700;transform:translateX(-50%) scaleX(0.85);">Z</span>
<svg style="left:725px;top:320px;" width="41" height="31"><g transform="translate(0.000,0.000) scale(1.0000,1.0000) translate(-0.0,-0.0)"><g stroke-width="1.0" stroke-linecap="round"><path d="M20 19.80000000000001 L20 8.300000000000011" stroke="#3a56d8"/><path d="M20 19.80000000000001 L31.5 19.80000000000001" stroke="#c044c0"/><path d="M20 19.80000000000001 L12 25.30000000000001" stroke="#3fae3a"/></g></g></svg>
<span class="t" style="left:745.00px;top:324px;font-size:3.4px;line-height:4px;color:#5a78ff;font-weight:700;transform:translateX(-50%) scaleX(0.9);">Z</span>
<span class="t" style="left:759.00px;top:338px;font-size:3.4px;line-height:4px;color:#d060d0;font-weight:700;transform:translateX(-50%) scaleX(0.9);">X</span>
<span class="t" style="left:735.50px;top:345px;font-size:3.4px;line-height:4px;color:#50c048;font-weight:700;transform:translateX(-50%) scaleX(0.9);">Y</span>
</div></body></html>
